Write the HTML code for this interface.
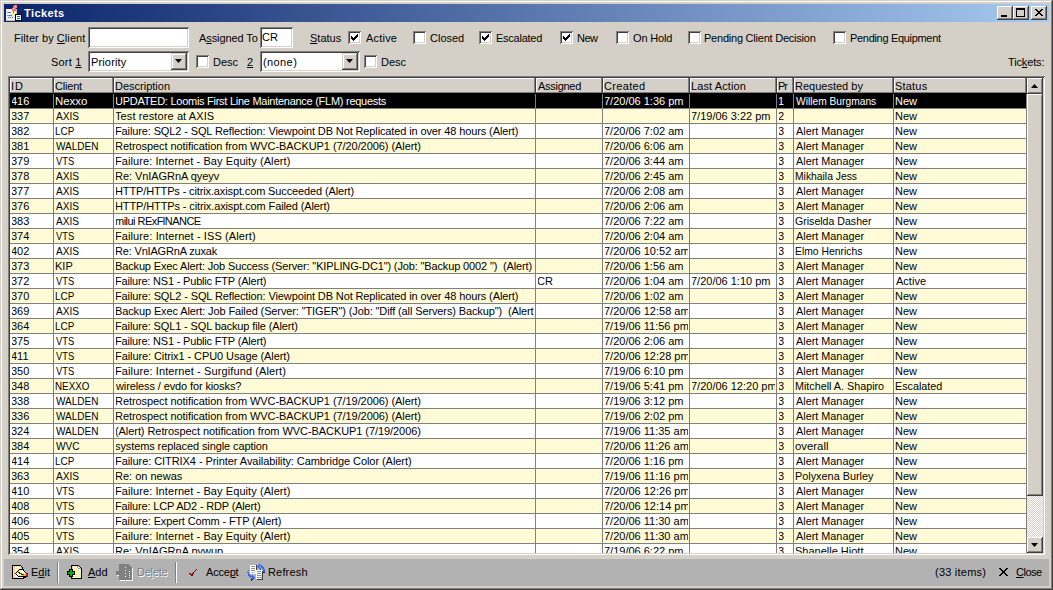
<!DOCTYPE html>
<html><head><meta charset="utf-8"><title>Tickets</title>
<style>
html,body{margin:0;padding:0}
body{width:1053px;height:590px;overflow:hidden;position:relative;background:#d4d0c8;font-family:"Liberation Sans",sans-serif;font-size:11px;color:#000}
div,span,svg{position:absolute;box-sizing:border-box}
.t{white-space:nowrap;line-height:15px}
.c{white-space:pre;line-height:15px;height:14px;overflow:hidden}
u{text-decoration:underline}
</style></head><body>
<div style="left:0;top:0;width:1053px;height:590px;background:#404040"></div>
<div style="left:0;top:0;width:1052px;height:589px;background:#d4d0c8"></div>
<div style="left:1px;top:1px;width:1051px;height:588px;background:#808080"></div>
<div style="left:1px;top:1px;width:1050px;height:587px;background:#ffffff"></div>
<div style="left:2px;top:2px;width:1049px;height:586px;background:#d4d0c8"></div>
<div style="left:4px;top:4px;width:1045px;height:18px;background:linear-gradient(to right,#0a246a,#a6caf0)"></div>
<span class="t" style="left:24px;top:6px;color:#fff;font-weight:bold;font-size:11px;line-height:15px;letter-spacing:0.4px">Tickets</span>
<svg style="position:absolute;left:4px;top:4px" width="20" height="18" viewBox="0 0 20 18" shape-rendering="crispEdges">
<rect x="2" y="5" width="11" height="12" fill="#c8c4b8"/>
<rect x="2" y="5" width="10" height="11" fill="#f4f4ee"/>
<rect x="4" y="8" width="3" height="1" fill="#5a6ae8"/><rect x="3" y="8" width="1" height="1" fill="#9090a0"/>
<rect x="3" y="11" width="6" height="1" fill="#9a9aa8"/><rect x="5" y="11" width="3" height="1" fill="#5a6ae8"/>
<rect x="4" y="13" width="1" height="1" fill="#5a6ae8"/><rect x="6" y="13" width="1" height="1" fill="#5a6ae8"/><rect x="8" y="13" width="1" height="1" fill="#5a6ae8"/>
<rect x="8" y="9" width="1" height="1" fill="#f0f040"/><rect x="10" y="9" width="1" height="1" fill="#f0f040"/>
<rect x="7" y="10" width="1" height="1" fill="#f0f040"/><rect x="9" y="10" width="1" height="1" fill="#f0f040"/>
<rect x="8" y="11" width="1" height="1" fill="#f0f040"/><rect x="10" y="11" width="1" height="1" fill="#f0f040"/>
<rect x="5" y="12" width="1" height="1" fill="#f0f040"/><rect x="7" y="12" width="1" height="1" fill="#f0f040"/><rect x="9" y="12" width="1" height="1" fill="#f0f040"/>
<rect x="3" y="14" width="1" height="1" fill="#f0f040"/><rect x="5" y="14" width="1" height="1" fill="#f0f040"/><rect x="7" y="14" width="1" height="1" fill="#f0f040"/><rect x="9" y="14" width="1" height="1" fill="#f0f040"/>
<rect x="9" y="2" width="3" height="3" fill="#f07070"/><rect x="10" y="1" width="3" height="3" fill="#f48080"/><rect x="11" y="2" width="1" height="1" fill="#f8f040"/>
<rect x="8" y="4" width="4" height="3" fill="#f07070"/><rect x="9" y="4" width="1" height="1" fill="#f8f040"/>
<rect x="9" y="7" width="1" height="2" fill="#707070"/>
<rect x="11" y="10" width="7" height="7" fill="#000"/>
<rect x="12" y="11" width="5" height="5" fill="#fff"/>
<rect x="13" y="12" width="3" height="1" fill="#008080"/><rect x="13" y="14" width="3" height="1" fill="#008080"/>
</svg>
<div style="left:997px;top:6px;width:16px;height:14px;background:#404040"></div>
<div style="left:997px;top:6px;width:15px;height:13px;background:#ffffff"></div>
<div style="left:998px;top:7px;width:14px;height:12px;background:#808080"></div>
<div style="left:998px;top:7px;width:13px;height:11px;background:#d4d0c8"></div>
<div style="left:1013px;top:6px;width:16px;height:14px;background:#404040"></div>
<div style="left:1013px;top:6px;width:15px;height:13px;background:#ffffff"></div>
<div style="left:1014px;top:7px;width:14px;height:12px;background:#808080"></div>
<div style="left:1014px;top:7px;width:13px;height:11px;background:#d4d0c8"></div>
<div style="left:1031px;top:6px;width:16px;height:14px;background:#404040"></div>
<div style="left:1031px;top:6px;width:15px;height:13px;background:#ffffff"></div>
<div style="left:1032px;top:7px;width:14px;height:12px;background:#808080"></div>
<div style="left:1032px;top:7px;width:13px;height:11px;background:#d4d0c8"></div>
<svg style="position:absolute;left:997px;top:6px" width="16" height="14"><rect x="4" y="9" width="6" height="2" fill="#000"/></svg>
<svg style="position:absolute;left:1013px;top:6px" width="16" height="14"><path d="M3 2h9v9h-9z M4 4v6h7v-6z" fill="#000" fill-rule="evenodd"/></svg>
<svg style="position:absolute;left:1035px;top:9px" width="8" height="7" shape-rendering="crispEdges"><rect x="0" y="0" width="1" height="1"/><rect x="1" y="0" width="1" height="1"/><rect x="6" y="0" width="1" height="1"/><rect x="7" y="0" width="1" height="1"/><rect x="1" y="1" width="1" height="1"/><rect x="2" y="1" width="1" height="1"/><rect x="5" y="1" width="1" height="1"/><rect x="6" y="1" width="1" height="1"/><rect x="2" y="2" width="1" height="1"/><rect x="3" y="2" width="1" height="1"/><rect x="4" y="2" width="1" height="1"/><rect x="5" y="2" width="1" height="1"/><rect x="3" y="3" width="1" height="1"/><rect x="4" y="3" width="1" height="1"/><rect x="2" y="4" width="1" height="1"/><rect x="3" y="4" width="1" height="1"/><rect x="4" y="4" width="1" height="1"/><rect x="5" y="4" width="1" height="1"/><rect x="1" y="5" width="1" height="1"/><rect x="2" y="5" width="1" height="1"/><rect x="5" y="5" width="1" height="1"/><rect x="6" y="5" width="1" height="1"/><rect x="0" y="6" width="1" height="1"/><rect x="1" y="6" width="1" height="1"/><rect x="6" y="6" width="1" height="1"/><rect x="7" y="6" width="1" height="1"/></svg>
<span class="t" style="left:14px;top:31px;letter-spacing:0.067px;">Filter by <u>C</u>lient</span>
<div style="left:88px;top:27px;width:101px;height:21px;background:#808080"></div>
<div style="left:89px;top:28px;width:100px;height:20px;background:#ffffff"></div>
<div style="left:89px;top:28px;width:99px;height:19px;background:#404040"></div>
<div style="left:90px;top:29px;width:98px;height:18px;background:#d4d0c8"></div>
<div style="left:90px;top:29px;width:97px;height:17px;background:#fff"></div>
<span class="t" style="left:199px;top:31px;letter-spacing:-0.100px;">A<u>s</u>signed To</span>
<div style="left:260px;top:27px;width:33px;height:21px;background:#808080"></div>
<div style="left:261px;top:28px;width:32px;height:20px;background:#ffffff"></div>
<div style="left:261px;top:28px;width:31px;height:19px;background:#404040"></div>
<div style="left:262px;top:29px;width:30px;height:18px;background:#d4d0c8"></div>
<div style="left:262px;top:29px;width:29px;height:17px;background:#fff"></div>
<span class="t" style="left:262px;top:30px;letter-spacing:0.000px;">CR</span>
<span class="t" style="left:310px;top:31px;letter-spacing:0.000px;"><u>S</u>tatus</span>
<div style="left:348px;top:31px;width:13px;height:13px;background:#808080"></div>
<div style="left:349px;top:32px;width:12px;height:12px;background:#ffffff"></div>
<div style="left:349px;top:32px;width:11px;height:11px;background:#404040"></div>
<div style="left:350px;top:33px;width:10px;height:10px;background:#d4d0c8"></div>
<div style="left:350px;top:33px;width:9px;height:9px;background:#fff"></div>
<svg style="position:absolute;left:348px;top:31px" width="13" height="13" shape-rendering="crispEdges"><rect x="9" y="3" width="1" height="1"/><rect x="8" y="4" width="1" height="1"/><rect x="9" y="4" width="1" height="1"/><rect x="3" y="5" width="1" height="1"/><rect x="7" y="5" width="1" height="1"/><rect x="8" y="5" width="1" height="1"/><rect x="9" y="5" width="1" height="1"/><rect x="3" y="6" width="1" height="1"/><rect x="4" y="6" width="1" height="1"/><rect x="6" y="6" width="1" height="1"/><rect x="7" y="6" width="1" height="1"/><rect x="8" y="6" width="1" height="1"/><rect x="3" y="7" width="1" height="1"/><rect x="4" y="7" width="1" height="1"/><rect x="5" y="7" width="1" height="1"/><rect x="6" y="7" width="1" height="1"/><rect x="7" y="7" width="1" height="1"/><rect x="4" y="8" width="1" height="1"/><rect x="5" y="8" width="1" height="1"/><rect x="6" y="8" width="1" height="1"/><rect x="5" y="9" width="1" height="1"/></svg>
<span class="t" style="left:366px;top:31px;letter-spacing:0.200px;">Active</span>
<div style="left:413px;top:31px;width:13px;height:13px;background:#808080"></div>
<div style="left:414px;top:32px;width:12px;height:12px;background:#ffffff"></div>
<div style="left:414px;top:32px;width:11px;height:11px;background:#404040"></div>
<div style="left:415px;top:33px;width:10px;height:10px;background:#d4d0c8"></div>
<div style="left:415px;top:33px;width:9px;height:9px;background:#fff"></div>
<span class="t" style="left:430px;top:31px;letter-spacing:0.000px;">Closed</span>
<div style="left:479px;top:31px;width:13px;height:13px;background:#808080"></div>
<div style="left:480px;top:32px;width:12px;height:12px;background:#ffffff"></div>
<div style="left:480px;top:32px;width:11px;height:11px;background:#404040"></div>
<div style="left:481px;top:33px;width:10px;height:10px;background:#d4d0c8"></div>
<div style="left:481px;top:33px;width:9px;height:9px;background:#fff"></div>
<svg style="position:absolute;left:479px;top:31px" width="13" height="13" shape-rendering="crispEdges"><rect x="9" y="3" width="1" height="1"/><rect x="8" y="4" width="1" height="1"/><rect x="9" y="4" width="1" height="1"/><rect x="3" y="5" width="1" height="1"/><rect x="7" y="5" width="1" height="1"/><rect x="8" y="5" width="1" height="1"/><rect x="9" y="5" width="1" height="1"/><rect x="3" y="6" width="1" height="1"/><rect x="4" y="6" width="1" height="1"/><rect x="6" y="6" width="1" height="1"/><rect x="7" y="6" width="1" height="1"/><rect x="8" y="6" width="1" height="1"/><rect x="3" y="7" width="1" height="1"/><rect x="4" y="7" width="1" height="1"/><rect x="5" y="7" width="1" height="1"/><rect x="6" y="7" width="1" height="1"/><rect x="7" y="7" width="1" height="1"/><rect x="4" y="8" width="1" height="1"/><rect x="5" y="8" width="1" height="1"/><rect x="6" y="8" width="1" height="1"/><rect x="5" y="9" width="1" height="1"/></svg>
<span class="t" style="left:496px;top:31px;letter-spacing:-0.250px;">Escalated</span>
<div style="left:560px;top:31px;width:13px;height:13px;background:#808080"></div>
<div style="left:561px;top:32px;width:12px;height:12px;background:#ffffff"></div>
<div style="left:561px;top:32px;width:11px;height:11px;background:#404040"></div>
<div style="left:562px;top:33px;width:10px;height:10px;background:#d4d0c8"></div>
<div style="left:562px;top:33px;width:9px;height:9px;background:#fff"></div>
<svg style="position:absolute;left:560px;top:31px" width="13" height="13" shape-rendering="crispEdges"><rect x="9" y="3" width="1" height="1"/><rect x="8" y="4" width="1" height="1"/><rect x="9" y="4" width="1" height="1"/><rect x="3" y="5" width="1" height="1"/><rect x="7" y="5" width="1" height="1"/><rect x="8" y="5" width="1" height="1"/><rect x="9" y="5" width="1" height="1"/><rect x="3" y="6" width="1" height="1"/><rect x="4" y="6" width="1" height="1"/><rect x="6" y="6" width="1" height="1"/><rect x="7" y="6" width="1" height="1"/><rect x="8" y="6" width="1" height="1"/><rect x="3" y="7" width="1" height="1"/><rect x="4" y="7" width="1" height="1"/><rect x="5" y="7" width="1" height="1"/><rect x="6" y="7" width="1" height="1"/><rect x="7" y="7" width="1" height="1"/><rect x="4" y="8" width="1" height="1"/><rect x="5" y="8" width="1" height="1"/><rect x="6" y="8" width="1" height="1"/><rect x="5" y="9" width="1" height="1"/></svg>
<span class="t" style="left:577px;top:31px;letter-spacing:-0.500px;">New</span>
<div style="left:616px;top:31px;width:13px;height:13px;background:#808080"></div>
<div style="left:617px;top:32px;width:12px;height:12px;background:#ffffff"></div>
<div style="left:617px;top:32px;width:11px;height:11px;background:#404040"></div>
<div style="left:618px;top:33px;width:10px;height:10px;background:#d4d0c8"></div>
<div style="left:618px;top:33px;width:9px;height:9px;background:#fff"></div>
<span class="t" style="left:633px;top:31px;letter-spacing:-0.167px;">On Hold</span>
<div style="left:688px;top:31px;width:13px;height:13px;background:#808080"></div>
<div style="left:689px;top:32px;width:12px;height:12px;background:#ffffff"></div>
<div style="left:689px;top:32px;width:11px;height:11px;background:#404040"></div>
<div style="left:690px;top:33px;width:10px;height:10px;background:#d4d0c8"></div>
<div style="left:690px;top:33px;width:9px;height:9px;background:#fff"></div>
<span class="t" style="left:704px;top:31px;letter-spacing:-0.227px;">Pending Client Decision</span>
<div style="left:833px;top:31px;width:13px;height:13px;background:#808080"></div>
<div style="left:834px;top:32px;width:12px;height:12px;background:#ffffff"></div>
<div style="left:834px;top:32px;width:11px;height:11px;background:#404040"></div>
<div style="left:835px;top:33px;width:10px;height:10px;background:#d4d0c8"></div>
<div style="left:835px;top:33px;width:9px;height:9px;background:#fff"></div>
<span class="t" style="left:850px;top:31px;letter-spacing:-0.312px;">Pending Equipment</span>
<span class="t" style="left:51px;top:55px;letter-spacing:0.200px;">Sort <u>1</u></span>
<div style="left:88px;top:51px;width:101px;height:21px;background:#808080"></div>
<div style="left:89px;top:52px;width:100px;height:20px;background:#ffffff"></div>
<div style="left:89px;top:52px;width:99px;height:19px;background:#404040"></div>
<div style="left:90px;top:53px;width:98px;height:18px;background:#d4d0c8"></div>
<div style="left:90px;top:53px;width:97px;height:17px;background:#fff"></div>
<span class="t" style="left:91px;top:55px;letter-spacing:0.143px;">Priority</span>
<div style="left:171px;top:53px;width:16px;height:17px;background:#404040"></div>
<div style="left:171px;top:53px;width:15px;height:16px;background:#d4d0c8"></div>
<div style="left:172px;top:54px;width:14px;height:15px;background:#808080"></div>
<div style="left:172px;top:54px;width:13px;height:14px;background:#ffffff"></div>
<div style="left:173px;top:55px;width:12px;height:13px;background:#d4d0c8"></div>
<svg style="position:absolute;left:171px;top:53px" width="16" height="17"><path d="M4 6h7l-3.5 4z" fill="#000"/></svg>
<div style="left:196px;top:55px;width:13px;height:13px;background:#808080"></div>
<div style="left:197px;top:56px;width:12px;height:12px;background:#ffffff"></div>
<div style="left:197px;top:56px;width:11px;height:11px;background:#404040"></div>
<div style="left:198px;top:57px;width:10px;height:10px;background:#d4d0c8"></div>
<div style="left:198px;top:57px;width:9px;height:9px;background:#fff"></div>
<span class="t" style="left:213px;top:55px;letter-spacing:0.000px;">Desc</span>
<span class="t" style="left:247px;top:55px;letter-spacing:0.000px;"><u>2</u></span>
<div style="left:260px;top:51px;width:100px;height:21px;background:#808080"></div>
<div style="left:261px;top:52px;width:99px;height:20px;background:#ffffff"></div>
<div style="left:261px;top:52px;width:98px;height:19px;background:#404040"></div>
<div style="left:262px;top:53px;width:97px;height:18px;background:#d4d0c8"></div>
<div style="left:262px;top:53px;width:96px;height:17px;background:#fff"></div>
<span class="t" style="left:263px;top:55px;letter-spacing:0.400px;">(none)</span>
<div style="left:342px;top:53px;width:16px;height:17px;background:#404040"></div>
<div style="left:342px;top:53px;width:15px;height:16px;background:#d4d0c8"></div>
<div style="left:343px;top:54px;width:14px;height:15px;background:#808080"></div>
<div style="left:343px;top:54px;width:13px;height:14px;background:#ffffff"></div>
<div style="left:344px;top:55px;width:12px;height:13px;background:#d4d0c8"></div>
<svg style="position:absolute;left:342px;top:53px" width="16" height="17"><path d="M4 6h7l-3.5 4z" fill="#000"/></svg>
<div style="left:364px;top:55px;width:13px;height:13px;background:#808080"></div>
<div style="left:365px;top:56px;width:12px;height:12px;background:#ffffff"></div>
<div style="left:365px;top:56px;width:11px;height:11px;background:#404040"></div>
<div style="left:366px;top:57px;width:10px;height:10px;background:#d4d0c8"></div>
<div style="left:366px;top:57px;width:9px;height:9px;background:#fff"></div>
<span class="t" style="left:381px;top:55px;letter-spacing:0.000px;">Desc</span>
<span class="t" style="left:1008px;top:55px;letter-spacing:-0.143px;">Tic<u>k</u>ets:</span>
<div style="left:8px;top:76px;width:1037px;height:479px;background:#808080"></div>
<div style="left:9px;top:77px;width:1036px;height:478px;background:#ffffff"></div>
<div style="left:9px;top:77px;width:1035px;height:477px;background:#404040"></div>
<div style="left:10px;top:78px;width:1034px;height:476px;background:#d4d0c8"></div>
<div style="left:10px;top:78px;width:1033px;height:475px;background:#fff"></div>
<div style="left:10px;top:78px;width:44px;height:15px;background:#404040"></div>
<div style="left:10px;top:78px;width:43px;height:15px;background:#808080"></div>
<div style="left:10px;top:78px;width:42px;height:14px;background:#ffffff"></div>
<div style="left:11px;top:79px;width:41px;height:13px;background:#d4d0c8"></div>
<span class="t" style="left:11px;top:79px;letter-spacing:1.000px;">ID</span>
<div style="left:54px;top:78px;width:60px;height:15px;background:#404040"></div>
<div style="left:54px;top:78px;width:59px;height:15px;background:#808080"></div>
<div style="left:54px;top:78px;width:58px;height:14px;background:#ffffff"></div>
<div style="left:55px;top:79px;width:57px;height:13px;background:#d4d0c8"></div>
<span class="t" style="left:55px;top:79px;letter-spacing:-0.200px;">Client</span>
<div style="left:114px;top:78px;width:422px;height:15px;background:#404040"></div>
<div style="left:114px;top:78px;width:421px;height:15px;background:#808080"></div>
<div style="left:114px;top:78px;width:420px;height:14px;background:#ffffff"></div>
<div style="left:115px;top:79px;width:419px;height:13px;background:#d4d0c8"></div>
<span class="t" style="left:115px;top:79px;letter-spacing:0.000px;">Description</span>
<div style="left:536px;top:78px;width:67px;height:15px;background:#404040"></div>
<div style="left:536px;top:78px;width:66px;height:15px;background:#808080"></div>
<div style="left:536px;top:78px;width:65px;height:14px;background:#ffffff"></div>
<div style="left:537px;top:79px;width:64px;height:13px;background:#d4d0c8"></div>
<span class="t" style="left:538px;top:79px;letter-spacing:-0.286px;">Assigned</span>
<div style="left:603px;top:78px;width:87px;height:15px;background:#404040"></div>
<div style="left:603px;top:78px;width:86px;height:15px;background:#808080"></div>
<div style="left:603px;top:78px;width:85px;height:14px;background:#ffffff"></div>
<div style="left:604px;top:79px;width:84px;height:13px;background:#d4d0c8"></div>
<span class="t" style="left:604px;top:79px;letter-spacing:0.333px;">Created</span>
<div style="left:690px;top:78px;width:87px;height:15px;background:#404040"></div>
<div style="left:690px;top:78px;width:86px;height:15px;background:#808080"></div>
<div style="left:690px;top:78px;width:85px;height:14px;background:#ffffff"></div>
<div style="left:691px;top:79px;width:84px;height:13px;background:#d4d0c8"></div>
<span class="t" style="left:691px;top:79px;letter-spacing:0.100px;">Last Action</span>
<div style="left:777px;top:78px;width:17px;height:15px;background:#404040"></div>
<div style="left:777px;top:78px;width:16px;height:15px;background:#808080"></div>
<div style="left:777px;top:78px;width:15px;height:14px;background:#ffffff"></div>
<div style="left:778px;top:79px;width:14px;height:13px;background:#d4d0c8"></div>
<span class="t" style="left:778px;top:79px;letter-spacing:-1.000px;">Pr</span>
<div style="left:794px;top:78px;width:100px;height:15px;background:#404040"></div>
<div style="left:794px;top:78px;width:99px;height:15px;background:#808080"></div>
<div style="left:794px;top:78px;width:98px;height:14px;background:#ffffff"></div>
<div style="left:795px;top:79px;width:97px;height:13px;background:#d4d0c8"></div>
<span class="t" style="left:795px;top:79px;letter-spacing:0.000px;">Requested by</span>
<div style="left:894px;top:78px;width:133px;height:15px;background:#404040"></div>
<div style="left:894px;top:78px;width:132px;height:15px;background:#808080"></div>
<div style="left:894px;top:78px;width:131px;height:14px;background:#ffffff"></div>
<div style="left:895px;top:79px;width:130px;height:13px;background:#d4d0c8"></div>
<span class="t" style="left:895px;top:79px;letter-spacing:0.200px;">Status</span>
<div style="left:10px;top:93px;width:1017px;height:460px;overflow:hidden">
<div style="left:0;top:0px;width:1017px;height:15px;background:#000"></div>
<span class="c" style="left:2px;top:1px;width:40px;color:#fff"><span style="position:relative;left:-1px;letter-spacing:0.000px">416</span></span>
<span class="c" style="left:45px;top:1px;width:57px;color:#fff"><span style="position:absolute;left:0px;top:0;transform:scaleX(1.0400);transform-origin:0 0">Nexxo</span></span>
<span class="c" style="left:106px;top:1px;width:418px;color:#fff"><span style="position:relative;left:-1px;letter-spacing:-0.269px">UPDATED: Loomis First Line Maintenance (FLM) requests</span></span>
<span class="c" style="left:595px;top:1px;width:83px;color:#fff"><span style="position:relative;left:-1px;letter-spacing:0.000px">7/20/06 1:36 pm</span></span>
<span class="c" style="left:769px;top:1px;width:13px;color:#fff"><span style="position:relative;left:-1px;letter-spacing:0.000px">1</span></span>
<span class="c" style="left:785px;top:1px;width:97px;color:#fff"><span style="position:absolute;left:1px;top:0;transform:scaleX(0.9305);transform-origin:0 0">Willem Burgmans</span></span>
<span class="c" style="left:885px;top:1px;width:130px;color:#fff"><span style="position:absolute;left:0px;top:0;transform:scaleX(1.0000);transform-origin:0 0">New</span></span>
<div style="left:0;top:15px;width:1017px;height:15px;background:#fffbd6"></div>
<span class="c" style="left:2px;top:16px;width:40px;color:#000"><span style="position:relative;left:-1px;letter-spacing:0.000px">337</span></span>
<span class="c" style="left:45px;top:16px;width:57px;color:#000"><span style="position:absolute;left:1px;top:0;transform:scaleX(0.9201);transform-origin:0 0">AXIS</span></span>
<span class="c" style="left:106px;top:16px;width:418px;color:#000"><span style="position:relative;left:-1px;letter-spacing:0.105px">Test restore at AXIS</span></span>
<span class="c" style="left:682px;top:16px;width:83px;color:#000"><span style="position:relative;left:-1px;letter-spacing:0.000px">7/19/06 3:22 pm</span></span>
<span class="c" style="left:769px;top:16px;width:13px;color:#000"><span style="position:relative;left:-1px;letter-spacing:0.000px">2</span></span>
<span class="c" style="left:885px;top:16px;width:130px;color:#000"><span style="position:absolute;left:0px;top:0;transform:scaleX(1.0000);transform-origin:0 0">New</span></span>
<div style="left:0;top:30px;width:1017px;height:15px;background:#fff"></div>
<span class="c" style="left:2px;top:31px;width:40px;color:#000"><span style="position:relative;left:-1px;letter-spacing:0.000px">382</span></span>
<span class="c" style="left:45px;top:31px;width:57px;color:#000"><span style="position:absolute;left:0px;top:0;transform:scaleX(0.9000);transform-origin:0 0">LCP</span></span>
<span class="c" style="left:106px;top:31px;width:418px;color:#000"><span style="position:relative;left:-1px;letter-spacing:-0.120px">Failure: SQL2 - SQL Reflection: Viewpoint DB Not Replicated in over 48 hours (Alert)</span></span>
<span class="c" style="left:595px;top:31px;width:83px;color:#000"><span style="position:relative;left:-1px;letter-spacing:0.000px">7/20/06 7:02 am</span></span>
<span class="c" style="left:769px;top:31px;width:13px;color:#000"><span style="position:relative;left:-1px;letter-spacing:0.000px">3</span></span>
<span class="c" style="left:785px;top:31px;width:97px;color:#000"><span style="position:absolute;left:1px;top:0;transform:scaleX(0.9855);transform-origin:0 0">Alert Manager</span></span>
<span class="c" style="left:885px;top:31px;width:130px;color:#000"><span style="position:absolute;left:0px;top:0;transform:scaleX(1.0000);transform-origin:0 0">New</span></span>
<div style="left:0;top:45px;width:1017px;height:15px;background:#fffbd6"></div>
<span class="c" style="left:2px;top:46px;width:40px;color:#000"><span style="position:relative;left:-1px;letter-spacing:0.000px">381</span></span>
<span class="c" style="left:45px;top:46px;width:57px;color:#000"><span style="position:absolute;left:1px;top:0;transform:scaleX(0.9116);transform-origin:0 0">WALDEN</span></span>
<span class="c" style="left:106px;top:46px;width:418px;color:#000"><span style="position:relative;left:-1px;letter-spacing:-0.068px">Retrospect notification from WVC-BACKUP1 (7/20/2006) (Alert)</span></span>
<span class="c" style="left:595px;top:46px;width:83px;color:#000"><span style="position:relative;left:-1px;letter-spacing:0.000px">7/20/06 6:06 am</span></span>
<span class="c" style="left:769px;top:46px;width:13px;color:#000"><span style="position:relative;left:-1px;letter-spacing:0.000px">3</span></span>
<span class="c" style="left:785px;top:46px;width:97px;color:#000"><span style="position:absolute;left:1px;top:0;transform:scaleX(0.9855);transform-origin:0 0">Alert Manager</span></span>
<span class="c" style="left:885px;top:46px;width:130px;color:#000"><span style="position:absolute;left:0px;top:0;transform:scaleX(1.0000);transform-origin:0 0">New</span></span>
<div style="left:0;top:60px;width:1017px;height:15px;background:#fff"></div>
<span class="c" style="left:2px;top:61px;width:40px;color:#000"><span style="position:relative;left:-1px;letter-spacing:0.000px">379</span></span>
<span class="c" style="left:45px;top:61px;width:57px;color:#000"><span style="position:absolute;left:1px;top:0;transform:scaleX(0.8526);transform-origin:0 0">VTS</span></span>
<span class="c" style="left:106px;top:61px;width:418px;color:#000"><span style="position:relative;left:-1px;letter-spacing:0.081px">Failure: Internet - Bay Equity (Alert)</span></span>
<span class="c" style="left:595px;top:61px;width:83px;color:#000"><span style="position:relative;left:-1px;letter-spacing:0.000px">7/20/06 3:44 am</span></span>
<span class="c" style="left:769px;top:61px;width:13px;color:#000"><span style="position:relative;left:-1px;letter-spacing:0.000px">3</span></span>
<span class="c" style="left:785px;top:61px;width:97px;color:#000"><span style="position:absolute;left:1px;top:0;transform:scaleX(0.9855);transform-origin:0 0">Alert Manager</span></span>
<span class="c" style="left:885px;top:61px;width:130px;color:#000"><span style="position:absolute;left:0px;top:0;transform:scaleX(1.0000);transform-origin:0 0">New</span></span>
<div style="left:0;top:75px;width:1017px;height:15px;background:#fffbd6"></div>
<span class="c" style="left:2px;top:76px;width:40px;color:#000"><span style="position:relative;left:-1px;letter-spacing:0.000px">378</span></span>
<span class="c" style="left:45px;top:76px;width:57px;color:#000"><span style="position:absolute;left:1px;top:0;transform:scaleX(0.9201);transform-origin:0 0">AXIS</span></span>
<span class="c" style="left:106px;top:76px;width:418px;color:#000"><span style="position:relative;left:-1px;letter-spacing:-0.059px">Re: VnIAGRnA qyeyv</span></span>
<span class="c" style="left:595px;top:76px;width:83px;color:#000"><span style="position:relative;left:-1px;letter-spacing:0.000px">7/20/06 2:45 am</span></span>
<span class="c" style="left:769px;top:76px;width:13px;color:#000"><span style="position:relative;left:-1px;letter-spacing:0.000px">3</span></span>
<span class="c" style="left:785px;top:76px;width:97px;color:#000"><span style="position:absolute;left:0px;top:0;transform:scaleX(0.9390);transform-origin:0 0">Mikhaila Jess</span></span>
<span class="c" style="left:885px;top:76px;width:130px;color:#000"><span style="position:absolute;left:0px;top:0;transform:scaleX(1.0000);transform-origin:0 0">New</span></span>
<div style="left:0;top:90px;width:1017px;height:15px;background:#fff"></div>
<span class="c" style="left:2px;top:91px;width:40px;color:#000"><span style="position:relative;left:-1px;letter-spacing:0.000px">377</span></span>
<span class="c" style="left:45px;top:91px;width:57px;color:#000"><span style="position:absolute;left:1px;top:0;transform:scaleX(0.9201);transform-origin:0 0">AXIS</span></span>
<span class="c" style="left:106px;top:91px;width:418px;color:#000"><span style="position:relative;left:-1px;letter-spacing:-0.128px">HTTP/HTTPs - citrix.axispt.com Succeeded (Alert)</span></span>
<span class="c" style="left:595px;top:91px;width:83px;color:#000"><span style="position:relative;left:-1px;letter-spacing:0.000px">7/20/06 2:08 am</span></span>
<span class="c" style="left:769px;top:91px;width:13px;color:#000"><span style="position:relative;left:-1px;letter-spacing:0.000px">3</span></span>
<span class="c" style="left:785px;top:91px;width:97px;color:#000"><span style="position:absolute;left:1px;top:0;transform:scaleX(0.9855);transform-origin:0 0">Alert Manager</span></span>
<span class="c" style="left:885px;top:91px;width:130px;color:#000"><span style="position:absolute;left:0px;top:0;transform:scaleX(1.0000);transform-origin:0 0">New</span></span>
<div style="left:0;top:105px;width:1017px;height:15px;background:#fffbd6"></div>
<span class="c" style="left:2px;top:106px;width:40px;color:#000"><span style="position:relative;left:-1px;letter-spacing:0.000px">376</span></span>
<span class="c" style="left:45px;top:106px;width:57px;color:#000"><span style="position:absolute;left:1px;top:0;transform:scaleX(0.9201);transform-origin:0 0">AXIS</span></span>
<span class="c" style="left:106px;top:106px;width:418px;color:#000"><span style="position:relative;left:-1px;letter-spacing:-0.114px">HTTP/HTTPs - citrix.axispt.com Failed (Alert)</span></span>
<span class="c" style="left:595px;top:106px;width:83px;color:#000"><span style="position:relative;left:-1px;letter-spacing:0.000px">7/20/06 2:06 am</span></span>
<span class="c" style="left:769px;top:106px;width:13px;color:#000"><span style="position:relative;left:-1px;letter-spacing:0.000px">3</span></span>
<span class="c" style="left:785px;top:106px;width:97px;color:#000"><span style="position:absolute;left:1px;top:0;transform:scaleX(0.9855);transform-origin:0 0">Alert Manager</span></span>
<span class="c" style="left:885px;top:106px;width:130px;color:#000"><span style="position:absolute;left:0px;top:0;transform:scaleX(1.0000);transform-origin:0 0">New</span></span>
<div style="left:0;top:120px;width:1017px;height:15px;background:#fff"></div>
<span class="c" style="left:2px;top:121px;width:40px;color:#000"><span style="position:relative;left:-1px;letter-spacing:0.000px">383</span></span>
<span class="c" style="left:45px;top:121px;width:57px;color:#000"><span style="position:absolute;left:1px;top:0;transform:scaleX(0.9201);transform-origin:0 0">AXIS</span></span>
<span class="c" style="left:106px;top:121px;width:418px;color:#000"><span style="position:relative;left:-1px;letter-spacing:-0.533px">milui RExFlNANCE</span></span>
<span class="c" style="left:595px;top:121px;width:83px;color:#000"><span style="position:relative;left:-1px;letter-spacing:0.000px">7/20/06 7:22 am</span></span>
<span class="c" style="left:769px;top:121px;width:13px;color:#000"><span style="position:relative;left:-1px;letter-spacing:0.000px">3</span></span>
<span class="c" style="left:785px;top:121px;width:97px;color:#000"><span style="position:absolute;left:0px;top:0;transform:scaleX(0.9615);transform-origin:0 0">Griselda Dasher</span></span>
<span class="c" style="left:885px;top:121px;width:130px;color:#000"><span style="position:absolute;left:0px;top:0;transform:scaleX(1.0000);transform-origin:0 0">New</span></span>
<div style="left:0;top:135px;width:1017px;height:15px;background:#fffbd6"></div>
<span class="c" style="left:2px;top:136px;width:40px;color:#000"><span style="position:relative;left:-1px;letter-spacing:0.000px">374</span></span>
<span class="c" style="left:45px;top:136px;width:57px;color:#000"><span style="position:absolute;left:1px;top:0;transform:scaleX(0.8526);transform-origin:0 0">VTS</span></span>
<span class="c" style="left:106px;top:136px;width:418px;color:#000"><span style="position:relative;left:-1px;letter-spacing:0.100px">Failure: Internet - ISS (Alert)</span></span>
<span class="c" style="left:595px;top:136px;width:83px;color:#000"><span style="position:relative;left:-1px;letter-spacing:0.000px">7/20/06 2:04 am</span></span>
<span class="c" style="left:769px;top:136px;width:13px;color:#000"><span style="position:relative;left:-1px;letter-spacing:0.000px">3</span></span>
<span class="c" style="left:785px;top:136px;width:97px;color:#000"><span style="position:absolute;left:1px;top:0;transform:scaleX(0.9855);transform-origin:0 0">Alert Manager</span></span>
<span class="c" style="left:885px;top:136px;width:130px;color:#000"><span style="position:absolute;left:0px;top:0;transform:scaleX(1.0000);transform-origin:0 0">New</span></span>
<div style="left:0;top:150px;width:1017px;height:15px;background:#fff"></div>
<span class="c" style="left:2px;top:151px;width:40px;color:#000"><span style="position:relative;left:-1px;letter-spacing:0.000px">402</span></span>
<span class="c" style="left:45px;top:151px;width:57px;color:#000"><span style="position:absolute;left:1px;top:0;transform:scaleX(0.9201);transform-origin:0 0">AXIS</span></span>
<span class="c" style="left:106px;top:151px;width:418px;color:#000"><span style="position:relative;left:-1px;letter-spacing:-0.176px">Re: VnIAGRnA zuxak</span></span>
<span class="c" style="left:595px;top:151px;width:83px;color:#000"><span style="position:relative;left:-1px;letter-spacing:0.000px">7/20/06 10:52 am</span></span>
<span class="c" style="left:769px;top:151px;width:13px;color:#000"><span style="position:relative;left:-1px;letter-spacing:0.000px">3</span></span>
<span class="c" style="left:785px;top:151px;width:97px;color:#000"><span style="position:absolute;left:0px;top:0;transform:scaleX(0.9429);transform-origin:0 0">Elmo Henrichs</span></span>
<span class="c" style="left:885px;top:151px;width:130px;color:#000"><span style="position:absolute;left:0px;top:0;transform:scaleX(1.0000);transform-origin:0 0">New</span></span>
<div style="left:0;top:165px;width:1017px;height:15px;background:#fffbd6"></div>
<span class="c" style="left:2px;top:166px;width:40px;color:#000"><span style="position:relative;left:-1px;letter-spacing:0.000px">373</span></span>
<span class="c" style="left:45px;top:166px;width:57px;color:#000"><span style="position:absolute;left:0px;top:0;transform:scaleX(1.0000);transform-origin:0 0">KIP</span></span>
<span class="c" style="left:106px;top:166px;width:418px;color:#000"><span style="position:relative;left:-1px;letter-spacing:-0.140px">Backup Exec Alert: Job Success (Server: &quot;KIPLING-DC1&quot;) (Job: &quot;Backup 0002 &quot;)  (Alert)</span></span>
<span class="c" style="left:595px;top:166px;width:83px;color:#000"><span style="position:relative;left:-1px;letter-spacing:0.000px">7/20/06 1:56 am</span></span>
<span class="c" style="left:769px;top:166px;width:13px;color:#000"><span style="position:relative;left:-1px;letter-spacing:0.000px">3</span></span>
<span class="c" style="left:785px;top:166px;width:97px;color:#000"><span style="position:absolute;left:1px;top:0;transform:scaleX(0.9855);transform-origin:0 0">Alert Manager</span></span>
<span class="c" style="left:885px;top:166px;width:130px;color:#000"><span style="position:absolute;left:0px;top:0;transform:scaleX(1.0000);transform-origin:0 0">New</span></span>
<div style="left:0;top:180px;width:1017px;height:15px;background:#fff"></div>
<span class="c" style="left:2px;top:181px;width:40px;color:#000"><span style="position:relative;left:-1px;letter-spacing:0.000px">372</span></span>
<span class="c" style="left:45px;top:181px;width:57px;color:#000"><span style="position:absolute;left:1px;top:0;transform:scaleX(0.8526);transform-origin:0 0">VTS</span></span>
<span class="c" style="left:106px;top:181px;width:418px;color:#000"><span style="position:relative;left:-1px;letter-spacing:-0.188px">Failure: NS1 - Public FTP (Alert)</span></span>
<span class="c" style="left:528px;top:181px;width:63px;color:#000"><span style="position:relative;left:-1px;letter-spacing:0.000px">CR</span></span>
<span class="c" style="left:595px;top:181px;width:83px;color:#000"><span style="position:relative;left:-1px;letter-spacing:0.000px">7/20/06 1:04 am</span></span>
<span class="c" style="left:682px;top:181px;width:83px;color:#000"><span style="position:relative;left:-1px;letter-spacing:0.000px">7/20/06 1:10 pm</span></span>
<span class="c" style="left:769px;top:181px;width:13px;color:#000"><span style="position:relative;left:-1px;letter-spacing:0.000px">3</span></span>
<span class="c" style="left:785px;top:181px;width:97px;color:#000"><span style="position:absolute;left:1px;top:0;transform:scaleX(0.9855);transform-origin:0 0">Alert Manager</span></span>
<span class="c" style="left:885px;top:181px;width:130px;color:#000"><span style="position:absolute;left:1px;top:0;transform:scaleX(1.0022);transform-origin:0 0">Active</span></span>
<div style="left:0;top:195px;width:1017px;height:15px;background:#fffbd6"></div>
<span class="c" style="left:2px;top:196px;width:40px;color:#000"><span style="position:relative;left:-1px;letter-spacing:0.000px">370</span></span>
<span class="c" style="left:45px;top:196px;width:57px;color:#000"><span style="position:absolute;left:0px;top:0;transform:scaleX(0.9000);transform-origin:0 0">LCP</span></span>
<span class="c" style="left:106px;top:196px;width:418px;color:#000"><span style="position:relative;left:-1px;letter-spacing:-0.120px">Failure: SQL2 - SQL Reflection: Viewpoint DB Not Replicated in over 48 hours (Alert)</span></span>
<span class="c" style="left:595px;top:196px;width:83px;color:#000"><span style="position:relative;left:-1px;letter-spacing:0.000px">7/20/06 1:02 am</span></span>
<span class="c" style="left:769px;top:196px;width:13px;color:#000"><span style="position:relative;left:-1px;letter-spacing:0.000px">3</span></span>
<span class="c" style="left:785px;top:196px;width:97px;color:#000"><span style="position:absolute;left:1px;top:0;transform:scaleX(0.9855);transform-origin:0 0">Alert Manager</span></span>
<span class="c" style="left:885px;top:196px;width:130px;color:#000"><span style="position:absolute;left:0px;top:0;transform:scaleX(1.0000);transform-origin:0 0">New</span></span>
<div style="left:0;top:210px;width:1017px;height:15px;background:#fff"></div>
<span class="c" style="left:2px;top:211px;width:40px;color:#000"><span style="position:relative;left:-1px;letter-spacing:0.000px">369</span></span>
<span class="c" style="left:45px;top:211px;width:57px;color:#000"><span style="position:absolute;left:1px;top:0;transform:scaleX(0.9201);transform-origin:0 0">AXIS</span></span>
<span class="c" style="left:106px;top:211px;width:418px;color:#000"><span style="position:relative;left:-1px;letter-spacing:-0.120px">Backup Exec Alert: Job Failed (Server: &quot;TIGER&quot;) (Job: &quot;Diff (all Servers) Backup&quot;)  (Alert)</span></span>
<span class="c" style="left:595px;top:211px;width:83px;color:#000"><span style="position:relative;left:-1px;letter-spacing:0.000px">7/20/06 12:58 am</span></span>
<span class="c" style="left:769px;top:211px;width:13px;color:#000"><span style="position:relative;left:-1px;letter-spacing:0.000px">3</span></span>
<span class="c" style="left:785px;top:211px;width:97px;color:#000"><span style="position:absolute;left:1px;top:0;transform:scaleX(0.9855);transform-origin:0 0">Alert Manager</span></span>
<span class="c" style="left:885px;top:211px;width:130px;color:#000"><span style="position:absolute;left:0px;top:0;transform:scaleX(1.0000);transform-origin:0 0">New</span></span>
<div style="left:0;top:225px;width:1017px;height:15px;background:#fffbd6"></div>
<span class="c" style="left:2px;top:226px;width:40px;color:#000"><span style="position:relative;left:-1px;letter-spacing:0.000px">364</span></span>
<span class="c" style="left:45px;top:226px;width:57px;color:#000"><span style="position:absolute;left:0px;top:0;transform:scaleX(0.9000);transform-origin:0 0">LCP</span></span>
<span class="c" style="left:106px;top:226px;width:418px;color:#000"><span style="position:relative;left:-1px;letter-spacing:-0.132px">Failure: SQL1 - SQL backup file (Alert)</span></span>
<span class="c" style="left:595px;top:226px;width:83px;color:#000"><span style="position:relative;left:-1px;letter-spacing:0.000px">7/19/06 11:56 pm</span></span>
<span class="c" style="left:769px;top:226px;width:13px;color:#000"><span style="position:relative;left:-1px;letter-spacing:0.000px">3</span></span>
<span class="c" style="left:785px;top:226px;width:97px;color:#000"><span style="position:absolute;left:1px;top:0;transform:scaleX(0.9855);transform-origin:0 0">Alert Manager</span></span>
<span class="c" style="left:885px;top:226px;width:130px;color:#000"><span style="position:absolute;left:0px;top:0;transform:scaleX(1.0000);transform-origin:0 0">New</span></span>
<div style="left:0;top:240px;width:1017px;height:15px;background:#fff"></div>
<span class="c" style="left:2px;top:241px;width:40px;color:#000"><span style="position:relative;left:-1px;letter-spacing:0.000px">375</span></span>
<span class="c" style="left:45px;top:241px;width:57px;color:#000"><span style="position:absolute;left:1px;top:0;transform:scaleX(0.8526);transform-origin:0 0">VTS</span></span>
<span class="c" style="left:106px;top:241px;width:418px;color:#000"><span style="position:relative;left:-1px;letter-spacing:-0.188px">Failure: NS1 - Public FTP (Alert)</span></span>
<span class="c" style="left:595px;top:241px;width:83px;color:#000"><span style="position:relative;left:-1px;letter-spacing:0.000px">7/20/06 2:06 am</span></span>
<span class="c" style="left:769px;top:241px;width:13px;color:#000"><span style="position:relative;left:-1px;letter-spacing:0.000px">3</span></span>
<span class="c" style="left:785px;top:241px;width:97px;color:#000"><span style="position:absolute;left:1px;top:0;transform:scaleX(0.9855);transform-origin:0 0">Alert Manager</span></span>
<span class="c" style="left:885px;top:241px;width:130px;color:#000"><span style="position:absolute;left:0px;top:0;transform:scaleX(1.0000);transform-origin:0 0">New</span></span>
<div style="left:0;top:255px;width:1017px;height:15px;background:#fffbd6"></div>
<span class="c" style="left:2px;top:256px;width:40px;color:#000"><span style="position:relative;left:-1px;letter-spacing:0.000px">411</span></span>
<span class="c" style="left:45px;top:256px;width:57px;color:#000"><span style="position:absolute;left:1px;top:0;transform:scaleX(0.8526);transform-origin:0 0">VTS</span></span>
<span class="c" style="left:106px;top:256px;width:418px;color:#000"><span style="position:relative;left:-1px;letter-spacing:-0.083px">Failure: Citrix1 - CPU0 Usage (Alert)</span></span>
<span class="c" style="left:595px;top:256px;width:83px;color:#000"><span style="position:relative;left:-1px;letter-spacing:0.000px">7/20/06 12:28 pm</span></span>
<span class="c" style="left:769px;top:256px;width:13px;color:#000"><span style="position:relative;left:-1px;letter-spacing:0.000px">3</span></span>
<span class="c" style="left:785px;top:256px;width:97px;color:#000"><span style="position:absolute;left:1px;top:0;transform:scaleX(0.9855);transform-origin:0 0">Alert Manager</span></span>
<span class="c" style="left:885px;top:256px;width:130px;color:#000"><span style="position:absolute;left:0px;top:0;transform:scaleX(1.0000);transform-origin:0 0">New</span></span>
<div style="left:0;top:270px;width:1017px;height:15px;background:#fff"></div>
<span class="c" style="left:2px;top:271px;width:40px;color:#000"><span style="position:relative;left:-1px;letter-spacing:0.000px">350</span></span>
<span class="c" style="left:45px;top:271px;width:57px;color:#000"><span style="position:absolute;left:1px;top:0;transform:scaleX(0.8526);transform-origin:0 0">VTS</span></span>
<span class="c" style="left:106px;top:271px;width:418px;color:#000"><span style="position:relative;left:-1px;letter-spacing:0.111px">Failure: Internet - Surgifund (Alert)</span></span>
<span class="c" style="left:595px;top:271px;width:83px;color:#000"><span style="position:relative;left:-1px;letter-spacing:0.000px">7/19/06 6:10 pm</span></span>
<span class="c" style="left:769px;top:271px;width:13px;color:#000"><span style="position:relative;left:-1px;letter-spacing:0.000px">3</span></span>
<span class="c" style="left:785px;top:271px;width:97px;color:#000"><span style="position:absolute;left:1px;top:0;transform:scaleX(0.9855);transform-origin:0 0">Alert Manager</span></span>
<span class="c" style="left:885px;top:271px;width:130px;color:#000"><span style="position:absolute;left:0px;top:0;transform:scaleX(1.0000);transform-origin:0 0">New</span></span>
<div style="left:0;top:285px;width:1017px;height:15px;background:#fffbd6"></div>
<span class="c" style="left:2px;top:286px;width:40px;color:#000"><span style="position:relative;left:-1px;letter-spacing:0.000px">348</span></span>
<span class="c" style="left:45px;top:286px;width:57px;color:#000"><span style="position:absolute;left:0px;top:0;transform:scaleX(0.8919);transform-origin:0 0">NEXXO</span></span>
<span class="c" style="left:106px;top:286px;width:418px;color:#000"><span style="position:relative;left:0px;letter-spacing:-0.115px">wireless / evdo for kiosks?</span></span>
<span class="c" style="left:595px;top:286px;width:83px;color:#000"><span style="position:relative;left:-1px;letter-spacing:0.000px">7/19/06 5:41 pm</span></span>
<span class="c" style="left:682px;top:286px;width:83px;color:#000"><span style="position:relative;left:-1px;letter-spacing:0.000px">7/20/06 12:20 pm</span></span>
<span class="c" style="left:769px;top:286px;width:13px;color:#000"><span style="position:relative;left:-1px;letter-spacing:0.000px">3</span></span>
<span class="c" style="left:785px;top:286px;width:97px;color:#000"><span style="position:absolute;left:0px;top:0;transform:scaleX(0.9780);transform-origin:0 0">Mitchell A. Shapiro</span></span>
<span class="c" style="left:885px;top:286px;width:130px;color:#000"><span style="position:absolute;left:0px;top:0;transform:scaleX(0.9787);transform-origin:0 0">Escalated</span></span>
<div style="left:0;top:300px;width:1017px;height:15px;background:#fff"></div>
<span class="c" style="left:2px;top:301px;width:40px;color:#000"><span style="position:relative;left:-1px;letter-spacing:0.000px">338</span></span>
<span class="c" style="left:45px;top:301px;width:57px;color:#000"><span style="position:absolute;left:1px;top:0;transform:scaleX(0.9116);transform-origin:0 0">WALDEN</span></span>
<span class="c" style="left:106px;top:301px;width:418px;color:#000"><span style="position:relative;left:-1px;letter-spacing:-0.068px">Retrospect notification from WVC-BACKUP1 (7/19/2006) (Alert)</span></span>
<span class="c" style="left:595px;top:301px;width:83px;color:#000"><span style="position:relative;left:-1px;letter-spacing:0.000px">7/19/06 3:12 pm</span></span>
<span class="c" style="left:769px;top:301px;width:13px;color:#000"><span style="position:relative;left:-1px;letter-spacing:0.000px">3</span></span>
<span class="c" style="left:785px;top:301px;width:97px;color:#000"><span style="position:absolute;left:1px;top:0;transform:scaleX(0.9855);transform-origin:0 0">Alert Manager</span></span>
<span class="c" style="left:885px;top:301px;width:130px;color:#000"><span style="position:absolute;left:0px;top:0;transform:scaleX(1.0000);transform-origin:0 0">New</span></span>
<div style="left:0;top:315px;width:1017px;height:15px;background:#fffbd6"></div>
<span class="c" style="left:2px;top:316px;width:40px;color:#000"><span style="position:relative;left:-1px;letter-spacing:0.000px">336</span></span>
<span class="c" style="left:45px;top:316px;width:57px;color:#000"><span style="position:absolute;left:1px;top:0;transform:scaleX(0.9116);transform-origin:0 0">WALDEN</span></span>
<span class="c" style="left:106px;top:316px;width:418px;color:#000"><span style="position:relative;left:-1px;letter-spacing:-0.068px">Retrospect notification from WVC-BACKUP1 (7/19/2006) (Alert)</span></span>
<span class="c" style="left:595px;top:316px;width:83px;color:#000"><span style="position:relative;left:-1px;letter-spacing:0.000px">7/19/06 2:02 pm</span></span>
<span class="c" style="left:769px;top:316px;width:13px;color:#000"><span style="position:relative;left:-1px;letter-spacing:0.000px">3</span></span>
<span class="c" style="left:785px;top:316px;width:97px;color:#000"><span style="position:absolute;left:1px;top:0;transform:scaleX(0.9855);transform-origin:0 0">Alert Manager</span></span>
<span class="c" style="left:885px;top:316px;width:130px;color:#000"><span style="position:absolute;left:0px;top:0;transform:scaleX(1.0000);transform-origin:0 0">New</span></span>
<div style="left:0;top:330px;width:1017px;height:15px;background:#fff"></div>
<span class="c" style="left:2px;top:331px;width:40px;color:#000"><span style="position:relative;left:-1px;letter-spacing:0.000px">324</span></span>
<span class="c" style="left:45px;top:331px;width:57px;color:#000"><span style="position:absolute;left:1px;top:0;transform:scaleX(0.9116);transform-origin:0 0">WALDEN</span></span>
<span class="c" style="left:106px;top:331px;width:418px;color:#000"><span style="position:relative;left:-1px;letter-spacing:-0.068px">(Alert) Retrospect notification from WVC-BACKUP1 (7/19/2006)</span></span>
<span class="c" style="left:595px;top:331px;width:83px;color:#000"><span style="position:relative;left:-1px;letter-spacing:0.000px">7/19/06 11:35 am</span></span>
<span class="c" style="left:769px;top:331px;width:13px;color:#000"><span style="position:relative;left:-1px;letter-spacing:0.000px">3</span></span>
<span class="c" style="left:785px;top:331px;width:97px;color:#000"><span style="position:absolute;left:1px;top:0;transform:scaleX(0.9855);transform-origin:0 0">Alert Manager</span></span>
<span class="c" style="left:885px;top:331px;width:130px;color:#000"><span style="position:absolute;left:0px;top:0;transform:scaleX(1.0000);transform-origin:0 0">New</span></span>
<div style="left:0;top:345px;width:1017px;height:15px;background:#fffbd6"></div>
<span class="c" style="left:2px;top:346px;width:40px;color:#000"><span style="position:relative;left:-1px;letter-spacing:0.000px">384</span></span>
<span class="c" style="left:45px;top:346px;width:57px;color:#000"><span style="position:absolute;left:1px;top:0;transform:scaleX(0.9184);transform-origin:0 0">WVC</span></span>
<span class="c" style="left:106px;top:346px;width:418px;color:#000"><span style="position:relative;left:-1px;letter-spacing:-0.100px">systems replaced single caption</span></span>
<span class="c" style="left:595px;top:346px;width:83px;color:#000"><span style="position:relative;left:-1px;letter-spacing:0.000px">7/20/06 11:26 am</span></span>
<span class="c" style="left:769px;top:346px;width:13px;color:#000"><span style="position:relative;left:-1px;letter-spacing:0.000px">3</span></span>
<span class="c" style="left:785px;top:346px;width:97px;color:#000"><span style="position:absolute;left:0px;top:0;transform:scaleX(1.0323);transform-origin:0 0">overall</span></span>
<span class="c" style="left:885px;top:346px;width:130px;color:#000"><span style="position:absolute;left:0px;top:0;transform:scaleX(1.0000);transform-origin:0 0">New</span></span>
<div style="left:0;top:360px;width:1017px;height:15px;background:#fff"></div>
<span class="c" style="left:2px;top:361px;width:40px;color:#000"><span style="position:relative;left:-1px;letter-spacing:0.000px">414</span></span>
<span class="c" style="left:45px;top:361px;width:57px;color:#000"><span style="position:absolute;left:0px;top:0;transform:scaleX(0.9000);transform-origin:0 0">LCP</span></span>
<span class="c" style="left:106px;top:361px;width:418px;color:#000"><span style="position:relative;left:-1px;letter-spacing:-0.063px">Failure: CITRIX4 - Printer Availability: Cambridge Color (Alert)</span></span>
<span class="c" style="left:595px;top:361px;width:83px;color:#000"><span style="position:relative;left:-1px;letter-spacing:0.000px">7/20/06 1:16 pm</span></span>
<span class="c" style="left:769px;top:361px;width:13px;color:#000"><span style="position:relative;left:-1px;letter-spacing:0.000px">3</span></span>
<span class="c" style="left:785px;top:361px;width:97px;color:#000"><span style="position:absolute;left:1px;top:0;transform:scaleX(0.9855);transform-origin:0 0">Alert Manager</span></span>
<span class="c" style="left:885px;top:361px;width:130px;color:#000"><span style="position:absolute;left:0px;top:0;transform:scaleX(1.0000);transform-origin:0 0">New</span></span>
<div style="left:0;top:375px;width:1017px;height:15px;background:#fffbd6"></div>
<span class="c" style="left:2px;top:376px;width:40px;color:#000"><span style="position:relative;left:-1px;letter-spacing:0.000px">363</span></span>
<span class="c" style="left:45px;top:376px;width:57px;color:#000"><span style="position:absolute;left:1px;top:0;transform:scaleX(0.9201);transform-origin:0 0">AXIS</span></span>
<span class="c" style="left:106px;top:376px;width:418px;color:#000"><span style="position:relative;left:-1px;letter-spacing:0.000px">Re: on newas</span></span>
<span class="c" style="left:595px;top:376px;width:83px;color:#000"><span style="position:relative;left:-1px;letter-spacing:0.000px">7/19/06 11:16 pm</span></span>
<span class="c" style="left:769px;top:376px;width:13px;color:#000"><span style="position:relative;left:-1px;letter-spacing:0.000px">3</span></span>
<span class="c" style="left:785px;top:376px;width:97px;color:#000"><span style="position:absolute;left:0px;top:0;transform:scaleX(0.9872);transform-origin:0 0">Polyxena Burley</span></span>
<span class="c" style="left:885px;top:376px;width:130px;color:#000"><span style="position:absolute;left:0px;top:0;transform:scaleX(1.0000);transform-origin:0 0">New</span></span>
<div style="left:0;top:390px;width:1017px;height:15px;background:#fff"></div>
<span class="c" style="left:2px;top:391px;width:40px;color:#000"><span style="position:relative;left:-1px;letter-spacing:0.000px">410</span></span>
<span class="c" style="left:45px;top:391px;width:57px;color:#000"><span style="position:absolute;left:1px;top:0;transform:scaleX(0.8526);transform-origin:0 0">VTS</span></span>
<span class="c" style="left:106px;top:391px;width:418px;color:#000"><span style="position:relative;left:-1px;letter-spacing:0.081px">Failure: Internet - Bay Equity (Alert)</span></span>
<span class="c" style="left:595px;top:391px;width:83px;color:#000"><span style="position:relative;left:-1px;letter-spacing:0.000px">7/20/06 12:26 pm</span></span>
<span class="c" style="left:769px;top:391px;width:13px;color:#000"><span style="position:relative;left:-1px;letter-spacing:0.000px">3</span></span>
<span class="c" style="left:785px;top:391px;width:97px;color:#000"><span style="position:absolute;left:1px;top:0;transform:scaleX(0.9855);transform-origin:0 0">Alert Manager</span></span>
<span class="c" style="left:885px;top:391px;width:130px;color:#000"><span style="position:absolute;left:0px;top:0;transform:scaleX(1.0000);transform-origin:0 0">New</span></span>
<div style="left:0;top:405px;width:1017px;height:15px;background:#fffbd6"></div>
<span class="c" style="left:2px;top:406px;width:40px;color:#000"><span style="position:relative;left:-1px;letter-spacing:0.000px">408</span></span>
<span class="c" style="left:45px;top:406px;width:57px;color:#000"><span style="position:absolute;left:1px;top:0;transform:scaleX(0.8526);transform-origin:0 0">VTS</span></span>
<span class="c" style="left:106px;top:406px;width:418px;color:#000"><span style="position:relative;left:-1px;letter-spacing:-0.172px">Failure: LCP AD2 - RDP (Alert)</span></span>
<span class="c" style="left:595px;top:406px;width:83px;color:#000"><span style="position:relative;left:-1px;letter-spacing:0.000px">7/20/06 12:14 pm</span></span>
<span class="c" style="left:769px;top:406px;width:13px;color:#000"><span style="position:relative;left:-1px;letter-spacing:0.000px">3</span></span>
<span class="c" style="left:785px;top:406px;width:97px;color:#000"><span style="position:absolute;left:1px;top:0;transform:scaleX(0.9855);transform-origin:0 0">Alert Manager</span></span>
<span class="c" style="left:885px;top:406px;width:130px;color:#000"><span style="position:absolute;left:0px;top:0;transform:scaleX(1.0000);transform-origin:0 0">New</span></span>
<div style="left:0;top:420px;width:1017px;height:15px;background:#fff"></div>
<span class="c" style="left:2px;top:421px;width:40px;color:#000"><span style="position:relative;left:-1px;letter-spacing:0.000px">406</span></span>
<span class="c" style="left:45px;top:421px;width:57px;color:#000"><span style="position:absolute;left:1px;top:0;transform:scaleX(0.8526);transform-origin:0 0">VTS</span></span>
<span class="c" style="left:106px;top:421px;width:418px;color:#000"><span style="position:relative;left:-1px;letter-spacing:-0.121px">Failure: Expert Comm - FTP (Alert)</span></span>
<span class="c" style="left:595px;top:421px;width:83px;color:#000"><span style="position:relative;left:-1px;letter-spacing:0.000px">7/20/06 11:30 am</span></span>
<span class="c" style="left:769px;top:421px;width:13px;color:#000"><span style="position:relative;left:-1px;letter-spacing:0.000px">3</span></span>
<span class="c" style="left:785px;top:421px;width:97px;color:#000"><span style="position:absolute;left:1px;top:0;transform:scaleX(0.9855);transform-origin:0 0">Alert Manager</span></span>
<span class="c" style="left:885px;top:421px;width:130px;color:#000"><span style="position:absolute;left:0px;top:0;transform:scaleX(1.0000);transform-origin:0 0">New</span></span>
<div style="left:0;top:435px;width:1017px;height:15px;background:#fffbd6"></div>
<span class="c" style="left:2px;top:436px;width:40px;color:#000"><span style="position:relative;left:-1px;letter-spacing:0.000px">405</span></span>
<span class="c" style="left:45px;top:436px;width:57px;color:#000"><span style="position:absolute;left:1px;top:0;transform:scaleX(0.8526);transform-origin:0 0">VTS</span></span>
<span class="c" style="left:106px;top:436px;width:418px;color:#000"><span style="position:relative;left:-1px;letter-spacing:0.081px">Failure: Internet - Bay Equity (Alert)</span></span>
<span class="c" style="left:595px;top:436px;width:83px;color:#000"><span style="position:relative;left:-1px;letter-spacing:0.000px">7/20/06 11:30 am</span></span>
<span class="c" style="left:769px;top:436px;width:13px;color:#000"><span style="position:relative;left:-1px;letter-spacing:0.000px">3</span></span>
<span class="c" style="left:785px;top:436px;width:97px;color:#000"><span style="position:absolute;left:1px;top:0;transform:scaleX(0.9855);transform-origin:0 0">Alert Manager</span></span>
<span class="c" style="left:885px;top:436px;width:130px;color:#000"><span style="position:absolute;left:0px;top:0;transform:scaleX(1.0000);transform-origin:0 0">New</span></span>
<div style="left:0;top:450px;width:1017px;height:15px;background:#fff"></div>
<span class="c" style="left:2px;top:451px;width:40px;color:#000"><span style="position:relative;left:-1px;letter-spacing:0.000px">354</span></span>
<span class="c" style="left:45px;top:451px;width:57px;color:#000"><span style="position:absolute;left:1px;top:0;transform:scaleX(0.9201);transform-origin:0 0">AXIS</span></span>
<span class="c" style="left:106px;top:451px;width:418px;color:#000"><span style="position:relative;left:-1px;letter-spacing:0.000px">Re: VnIAGRnA pywup</span></span>
<span class="c" style="left:595px;top:451px;width:83px;color:#000"><span style="position:relative;left:-1px;letter-spacing:0.000px">7/19/06 6:22 pm</span></span>
<span class="c" style="left:769px;top:451px;width:13px;color:#000"><span style="position:relative;left:-1px;letter-spacing:0.000px">3</span></span>
<span class="c" style="left:785px;top:451px;width:97px;color:#000"><span style="position:absolute;left:0px;top:0;transform:scaleX(1.0000);transform-origin:0 0">Shanelle Hiott</span></span>
<span class="c" style="left:885px;top:451px;width:130px;color:#000"><span style="position:absolute;left:0px;top:0;transform:scaleX(1.0000);transform-origin:0 0">New</span></span>
<div style="left:0;top:15px;width:1017px;height:1px;background:#808080"></div>
<div style="left:0;top:30px;width:1017px;height:1px;background:#808080"></div>
<div style="left:0;top:45px;width:1017px;height:1px;background:#808080"></div>
<div style="left:0;top:60px;width:1017px;height:1px;background:#808080"></div>
<div style="left:0;top:75px;width:1017px;height:1px;background:#808080"></div>
<div style="left:0;top:90px;width:1017px;height:1px;background:#808080"></div>
<div style="left:0;top:105px;width:1017px;height:1px;background:#808080"></div>
<div style="left:0;top:120px;width:1017px;height:1px;background:#808080"></div>
<div style="left:0;top:135px;width:1017px;height:1px;background:#808080"></div>
<div style="left:0;top:150px;width:1017px;height:1px;background:#808080"></div>
<div style="left:0;top:165px;width:1017px;height:1px;background:#808080"></div>
<div style="left:0;top:180px;width:1017px;height:1px;background:#808080"></div>
<div style="left:0;top:195px;width:1017px;height:1px;background:#808080"></div>
<div style="left:0;top:210px;width:1017px;height:1px;background:#808080"></div>
<div style="left:0;top:225px;width:1017px;height:1px;background:#808080"></div>
<div style="left:0;top:240px;width:1017px;height:1px;background:#808080"></div>
<div style="left:0;top:255px;width:1017px;height:1px;background:#808080"></div>
<div style="left:0;top:270px;width:1017px;height:1px;background:#808080"></div>
<div style="left:0;top:285px;width:1017px;height:1px;background:#808080"></div>
<div style="left:0;top:300px;width:1017px;height:1px;background:#808080"></div>
<div style="left:0;top:315px;width:1017px;height:1px;background:#808080"></div>
<div style="left:0;top:330px;width:1017px;height:1px;background:#808080"></div>
<div style="left:0;top:345px;width:1017px;height:1px;background:#808080"></div>
<div style="left:0;top:360px;width:1017px;height:1px;background:#808080"></div>
<div style="left:0;top:375px;width:1017px;height:1px;background:#808080"></div>
<div style="left:0;top:390px;width:1017px;height:1px;background:#808080"></div>
<div style="left:0;top:405px;width:1017px;height:1px;background:#808080"></div>
<div style="left:0;top:420px;width:1017px;height:1px;background:#808080"></div>
<div style="left:0;top:435px;width:1017px;height:1px;background:#808080"></div>
<div style="left:0;top:450px;width:1017px;height:1px;background:#808080"></div>
<div style="left:0;top:465px;width:1017px;height:1px;background:#808080"></div>
<div style="left:43px;top:1px;width:1px;height:459px;background:#808080"></div>
<div style="left:103px;top:1px;width:1px;height:459px;background:#808080"></div>
<div style="left:525px;top:1px;width:1px;height:459px;background:#808080"></div>
<div style="left:592px;top:1px;width:1px;height:459px;background:#808080"></div>
<div style="left:679px;top:1px;width:1px;height:459px;background:#808080"></div>
<div style="left:766px;top:1px;width:1px;height:459px;background:#808080"></div>
<div style="left:783px;top:1px;width:1px;height:459px;background:#808080"></div>
<div style="left:883px;top:1px;width:1px;height:459px;background:#808080"></div>
<div style="left:1016px;top:1px;width:1px;height:459px;background:#808080"></div>
</div>
<div style="left:1027px;top:78px;width:16px;height:16px;background:#404040"></div>
<div style="left:1027px;top:78px;width:15px;height:15px;background:#ffffff"></div>
<div style="left:1028px;top:79px;width:14px;height:14px;background:#808080"></div>
<div style="left:1028px;top:79px;width:13px;height:13px;background:#d4d0c8"></div>
<svg style="position:absolute;left:1027px;top:78px" width="16" height="16"><path d="M4 10h7l-3.5-4z" fill="#000"/></svg>
<div style="left:1027px;top:94px;width:16px;height:402px;background:#404040"></div>
<div style="left:1027px;top:94px;width:15px;height:401px;background:#ffffff"></div>
<div style="left:1028px;top:95px;width:14px;height:400px;background:#808080"></div>
<div style="left:1028px;top:95px;width:13px;height:399px;background:#d4d0c8"></div>
<div style="left:1027px;top:496px;width:16px;height:41px;background:repeating-conic-gradient(#fff 0 25%,#d4d0c8 0 50%) 0 0/2px 2px"></div>
<div style="left:1027px;top:537px;width:16px;height:16px;background:#404040"></div>
<div style="left:1027px;top:537px;width:15px;height:15px;background:#ffffff"></div>
<div style="left:1028px;top:538px;width:14px;height:14px;background:#808080"></div>
<div style="left:1028px;top:538px;width:13px;height:13px;background:#d4d0c8"></div>
<svg style="position:absolute;left:1027px;top:537px" width="16" height="16"><path d="M4 6h7l-3.5 4z" fill="#000"/></svg>
<div style="left:4px;top:559px;width:1045px;height:27px;background:#b2b2b2"></div>
<div style="left:57px;top:562px;width:1px;height:21px;background:#808080"></div>
<div style="left:58px;top:562px;width:1px;height:21px;background:#fff"></div>
<div style="left:175px;top:562px;width:1px;height:21px;background:#808080"></div>
<div style="left:176px;top:562px;width:1px;height:21px;background:#fff"></div>
<svg style="position:absolute;left:12px;top:565px" width="17" height="14" shape-rendering="crispEdges"><rect x="0" y="0" width="1" height="1" fill="#000000"/><rect x="1" y="0" width="1" height="1" fill="#000000"/><rect x="2" y="0" width="1" height="1" fill="#000000"/><rect x="3" y="0" width="1" height="1" fill="#000000"/><rect x="4" y="0" width="1" height="1" fill="#000000"/><rect x="5" y="0" width="1" height="1" fill="#000000"/><rect x="6" y="0" width="1" height="1" fill="#000000"/><rect x="7" y="0" width="1" height="1" fill="#000000"/><rect x="8" y="0" width="1" height="1" fill="#000000"/><rect x="0" y="1" width="1" height="1" fill="#000000"/><rect x="1" y="1" width="1" height="1" fill="#d8f0d8"/><rect x="2" y="1" width="1" height="1" fill="#f8c0b0"/><rect x="3" y="1" width="1" height="1" fill="#fffbe8"/><rect x="4" y="1" width="1" height="1" fill="#f0f080"/><rect x="5" y="1" width="1" height="1" fill="#f0f080"/><rect x="6" y="1" width="1" height="1" fill="#f0f080"/><rect x="7" y="1" width="1" height="1" fill="#fffbe8"/><rect x="8" y="1" width="1" height="1" fill="#d8d8d8"/><rect x="9" y="1" width="1" height="1" fill="#000000"/><rect x="0" y="2" width="1" height="1" fill="#000000"/><rect x="1" y="2" width="1" height="1" fill="#d8f0d8"/><rect x="2" y="2" width="1" height="1" fill="#f8c0b0"/><rect x="3" y="2" width="1" height="1" fill="#fffbe8"/><rect x="4" y="2" width="1" height="1" fill="#fffbe8"/><rect x="5" y="2" width="1" height="1" fill="#fffbe8"/><rect x="6" y="2" width="1" height="1" fill="#fffbe8"/><rect x="7" y="2" width="1" height="1" fill="#fffbe8"/><rect x="8" y="2" width="1" height="1" fill="#d8d8d8"/><rect x="10" y="2" width="1" height="1" fill="#000000"/><rect x="0" y="3" width="1" height="1" fill="#000000"/><rect x="1" y="3" width="1" height="1" fill="#d8f0d8"/><rect x="2" y="3" width="1" height="1" fill="#f8c0b0"/><rect x="3" y="3" width="1" height="1" fill="#fffbe8"/><rect x="4" y="3" width="1" height="1" fill="#f0f080"/><rect x="5" y="3" width="1" height="1" fill="#f0f080"/><rect x="6" y="3" width="1" height="1" fill="#f0f080"/><rect x="7" y="3" width="1" height="1" fill="#fffbe8"/><rect x="8" y="3" width="1" height="1" fill="#d8d8d8"/><rect x="9" y="3" width="1" height="1" fill="#d8d8d8"/><rect x="10" y="3" width="1" height="1" fill="#000000"/><rect x="0" y="4" width="1" height="1" fill="#000000"/><rect x="1" y="4" width="1" height="1" fill="#d8f0d8"/><rect x="2" y="4" width="1" height="1" fill="#f8c0b0"/><rect x="3" y="4" width="1" height="1" fill="#fffbe8"/><rect x="4" y="4" width="1" height="1" fill="#fffbe8"/><rect x="5" y="4" width="1" height="1" fill="#fffbe8"/><rect x="6" y="4" width="1" height="1" fill="#fffbe8"/><rect x="7" y="4" width="1" height="1" fill="#000000"/><rect x="8" y="4" width="1" height="1" fill="#000000"/><rect x="9" y="4" width="1" height="1" fill="#000000"/><rect x="10" y="4" width="1" height="1" fill="#000000"/><rect x="11" y="4" width="1" height="1" fill="#000000"/><rect x="0" y="5" width="1" height="1" fill="#000000"/><rect x="1" y="5" width="1" height="1" fill="#d8f0d8"/><rect x="2" y="5" width="1" height="1" fill="#f8c0b0"/><rect x="3" y="5" width="1" height="1" fill="#fffbe8"/><rect x="4" y="5" width="1" height="1" fill="#f0f080"/><rect x="5" y="5" width="1" height="1" fill="#f0f080"/><rect x="6" y="5" width="1" height="1" fill="#000000"/><rect x="7" y="5" width="1" height="1" fill="#f8e8b0"/><rect x="8" y="5" width="1" height="1" fill="#f8e8b0"/><rect x="9" y="5" width="1" height="1" fill="#fffbe8"/><rect x="10" y="5" width="1" height="1" fill="#fffbe8"/><rect x="11" y="5" width="1" height="1" fill="#000000"/><rect x="0" y="6" width="1" height="1" fill="#000000"/><rect x="1" y="6" width="1" height="1" fill="#d8f0d8"/><rect x="2" y="6" width="1" height="1" fill="#f8c0b0"/><rect x="3" y="6" width="1" height="1" fill="#fffbe8"/><rect x="4" y="6" width="1" height="1" fill="#f0f080"/><rect x="5" y="6" width="1" height="1" fill="#000000"/><rect x="6" y="6" width="1" height="1" fill="#f0a020"/><rect x="7" y="6" width="1" height="1" fill="#f8e8b0"/><rect x="8" y="6" width="1" height="1" fill="#f8e8b0"/><rect x="9" y="6" width="1" height="1" fill="#fffbe8"/><rect x="10" y="6" width="1" height="1" fill="#fffbe8"/><rect x="11" y="6" width="1" height="1" fill="#fffbe8"/><rect x="12" y="6" width="1" height="1" fill="#000000"/><rect x="0" y="7" width="1" height="1" fill="#000000"/><rect x="1" y="7" width="1" height="1" fill="#d8f0d8"/><rect x="2" y="7" width="1" height="1" fill="#f8c0b0"/><rect x="3" y="7" width="1" height="1" fill="#fffbe8"/><rect x="4" y="7" width="1" height="1" fill="#000000"/><rect x="5" y="7" width="1" height="1" fill="#f8e8b0"/><rect x="6" y="7" width="1" height="1" fill="#404040"/><rect x="7" y="7" width="1" height="1" fill="#404040"/><rect x="8" y="7" width="1" height="1" fill="#f8e8b0"/><rect x="9" y="7" width="1" height="1" fill="#fffbe8"/><rect x="10" y="7" width="1" height="1" fill="#fffbe8"/><rect x="11" y="7" width="1" height="1" fill="#fffbe8"/><rect x="12" y="7" width="1" height="1" fill="#fffbe8"/><rect x="13" y="7" width="1" height="1" fill="#000000"/><rect x="0" y="8" width="1" height="1" fill="#000000"/><rect x="1" y="8" width="1" height="1" fill="#d8f0d8"/><rect x="2" y="8" width="1" height="1" fill="#f8c0b0"/><rect x="3" y="8" width="1" height="1" fill="#000000"/><rect x="4" y="8" width="1" height="1" fill="#f8e8b0"/><rect x="5" y="8" width="1" height="1" fill="#fffbe8"/><rect x="6" y="8" width="1" height="1" fill="#fffbe8"/><rect x="7" y="8" width="1" height="1" fill="#404040"/><rect x="8" y="8" width="1" height="1" fill="#404040"/><rect x="9" y="8" width="1" height="1" fill="#404040"/><rect x="10" y="8" width="1" height="1" fill="#f8e8b0"/><rect x="11" y="8" width="1" height="1" fill="#fffbe8"/><rect x="12" y="8" width="1" height="1" fill="#fffbe8"/><rect x="13" y="8" width="1" height="1" fill="#fffbe8"/><rect x="14" y="8" width="1" height="1" fill="#000000"/><rect x="15" y="8" width="1" height="1" fill="#900060"/><rect x="0" y="9" width="1" height="1" fill="#000000"/><rect x="1" y="9" width="1" height="1" fill="#d8f0d8"/><rect x="2" y="9" width="1" height="1" fill="#f8c0b0"/><rect x="3" y="9" width="1" height="1" fill="#fffbe8"/><rect x="4" y="9" width="1" height="1" fill="#000000"/><rect x="5" y="9" width="1" height="1" fill="#fffbe8"/><rect x="6" y="9" width="1" height="1" fill="#fffbe8"/><rect x="7" y="9" width="1" height="1" fill="#fffbe8"/><rect x="8" y="9" width="1" height="1" fill="#fffbe8"/><rect x="9" y="9" width="1" height="1" fill="#404040"/><rect x="10" y="9" width="1" height="1" fill="#404040"/><rect x="11" y="9" width="1" height="1" fill="#404040"/><rect x="12" y="9" width="1" height="1" fill="#f0b040"/><rect x="13" y="9" width="1" height="1" fill="#f0b040"/><rect x="14" y="9" width="1" height="1" fill="#e01050"/><rect x="15" y="9" width="1" height="1" fill="#e01050"/><rect x="0" y="10" width="1" height="1" fill="#000000"/><rect x="1" y="10" width="1" height="1" fill="#d8f0d8"/><rect x="2" y="10" width="1" height="1" fill="#f8c0b0"/><rect x="3" y="10" width="1" height="1" fill="#fffbe8"/><rect x="4" y="10" width="1" height="1" fill="#fffbe8"/><rect x="5" y="10" width="1" height="1" fill="#000000"/><rect x="6" y="10" width="1" height="1" fill="#f8e8b0"/><rect x="7" y="10" width="1" height="1" fill="#f8e8b0"/><rect x="8" y="10" width="1" height="1" fill="#f8e8b0"/><rect x="9" y="10" width="1" height="1" fill="#f8e8b0"/><rect x="10" y="10" width="1" height="1" fill="#f0b040"/><rect x="11" y="10" width="1" height="1" fill="#f0b040"/><rect x="12" y="10" width="1" height="1" fill="#f0b040"/><rect x="13" y="10" width="1" height="1" fill="#f0b040"/><rect x="14" y="10" width="1" height="1" fill="#e01050"/><rect x="15" y="10" width="1" height="1" fill="#900060"/><rect x="0" y="11" width="1" height="1" fill="#000000"/><rect x="1" y="11" width="1" height="1" fill="#d8f0d8"/><rect x="2" y="11" width="1" height="1" fill="#f8c0b0"/><rect x="3" y="11" width="1" height="1" fill="#fffbe8"/><rect x="4" y="11" width="1" height="1" fill="#fffbe8"/><rect x="5" y="11" width="1" height="1" fill="#fffbe8"/><rect x="6" y="11" width="1" height="1" fill="#000000"/><rect x="7" y="11" width="1" height="1" fill="#000000"/><rect x="8" y="11" width="1" height="1" fill="#000000"/><rect x="9" y="11" width="1" height="1" fill="#000000"/><rect x="10" y="11" width="1" height="1" fill="#000000"/><rect x="11" y="11" width="1" height="1" fill="#000000"/><rect x="12" y="11" width="1" height="1" fill="#000000"/><rect x="13" y="11" width="1" height="1" fill="#000000"/><rect x="14" y="11" width="1" height="1" fill="#900060"/><rect x="15" y="11" width="1" height="1" fill="#900060"/><rect x="0" y="12" width="1" height="1" fill="#000000"/><rect x="1" y="12" width="1" height="1" fill="#d8f0d8"/><rect x="2" y="12" width="1" height="1" fill="#f8c0b0"/><rect x="3" y="12" width="1" height="1" fill="#c8d8f0"/><rect x="4" y="12" width="1" height="1" fill="#c8d8f0"/><rect x="5" y="12" width="1" height="1" fill="#c8d8f0"/><rect x="6" y="12" width="1" height="1" fill="#fffbe8"/><rect x="7" y="12" width="1" height="1" fill="#fffbe8"/><rect x="8" y="12" width="1" height="1" fill="#fffbe8"/><rect x="9" y="12" width="1" height="1" fill="#fffbe8"/><rect x="10" y="12" width="1" height="1" fill="#fffbe8"/><rect x="11" y="12" width="1" height="1" fill="#000000"/><rect x="12" y="12" width="1" height="1" fill="#000000"/><rect x="13" y="12" width="1" height="1" fill="#000000"/><rect x="0" y="13" width="1" height="1" fill="#000000"/><rect x="1" y="13" width="1" height="1" fill="#000000"/><rect x="2" y="13" width="1" height="1" fill="#000000"/><rect x="3" y="13" width="1" height="1" fill="#000000"/><rect x="4" y="13" width="1" height="1" fill="#000000"/><rect x="5" y="13" width="1" height="1" fill="#000000"/><rect x="6" y="13" width="1" height="1" fill="#000000"/><rect x="7" y="13" width="1" height="1" fill="#000000"/><rect x="8" y="13" width="1" height="1" fill="#000000"/><rect x="9" y="13" width="1" height="1" fill="#000000"/><rect x="10" y="13" width="1" height="1" fill="#000000"/><rect x="11" y="13" width="1" height="1" fill="#000000"/></svg>
<svg style="position:absolute;left:67px;top:565px" width="15" height="14" shape-rendering="crispEdges"><rect x="4" y="0" width="1" height="1" fill="#000000"/><rect x="5" y="0" width="1" height="1" fill="#000000"/><rect x="6" y="0" width="1" height="1" fill="#000000"/><rect x="7" y="0" width="1" height="1" fill="#000000"/><rect x="8" y="0" width="1" height="1" fill="#000000"/><rect x="9" y="0" width="1" height="1" fill="#000000"/><rect x="10" y="0" width="1" height="1" fill="#000000"/><rect x="11" y="0" width="1" height="1" fill="#000000"/><rect x="4" y="1" width="1" height="1" fill="#000000"/><rect x="5" y="1" width="1" height="1" fill="#f8c8b8"/><rect x="6" y="1" width="1" height="1" fill="#f0f090"/><rect x="7" y="1" width="1" height="1" fill="#f0f090"/><rect x="8" y="1" width="1" height="1" fill="#f0f090"/><rect x="9" y="1" width="1" height="1" fill="#f0f090"/><rect x="10" y="1" width="1" height="1" fill="#a0a0a0"/><rect x="11" y="1" width="1" height="1" fill="#e8e8e8"/><rect x="12" y="1" width="1" height="1" fill="#000000"/><rect x="4" y="2" width="1" height="1" fill="#000000"/><rect x="5" y="2" width="1" height="1" fill="#f8c8b8"/><rect x="6" y="2" width="1" height="1" fill="#fffbe8"/><rect x="7" y="2" width="1" height="1" fill="#fffbe8"/><rect x="8" y="2" width="1" height="1" fill="#fffbe8"/><rect x="9" y="2" width="1" height="1" fill="#fffbe8"/><rect x="10" y="2" width="1" height="1" fill="#a0a0a0"/><rect x="11" y="2" width="1" height="1" fill="#e8e8e8"/><rect x="12" y="2" width="1" height="1" fill="#e8e8e8"/><rect x="13" y="2" width="1" height="1" fill="#000000"/><rect x="4" y="3" width="1" height="1" fill="#000000"/><rect x="5" y="3" width="1" height="1" fill="#f8c8b8"/><rect x="6" y="3" width="1" height="1" fill="#f0f090"/><rect x="7" y="3" width="1" height="1" fill="#f0f090"/><rect x="8" y="3" width="1" height="1" fill="#f0f090"/><rect x="9" y="3" width="1" height="1" fill="#f0f090"/><rect x="10" y="3" width="1" height="1" fill="#fffbe8"/><rect x="11" y="3" width="1" height="1" fill="#a0a0a0"/><rect x="12" y="3" width="1" height="1" fill="#a0a0a0"/><rect x="13" y="3" width="1" height="1" fill="#a0a0a0"/><rect x="14" y="3" width="1" height="1" fill="#000000"/><rect x="2" y="4" width="1" height="1" fill="#000000"/><rect x="3" y="4" width="1" height="1" fill="#000000"/><rect x="4" y="4" width="1" height="1" fill="#000000"/><rect x="5" y="4" width="1" height="1" fill="#000000"/><rect x="6" y="4" width="1" height="1" fill="#fffbe8"/><rect x="7" y="4" width="1" height="1" fill="#fffbe8"/><rect x="8" y="4" width="1" height="1" fill="#fffbe8"/><rect x="9" y="4" width="1" height="1" fill="#fffbe8"/><rect x="10" y="4" width="1" height="1" fill="#fffbe8"/><rect x="11" y="4" width="1" height="1" fill="#fffbe8"/><rect x="12" y="4" width="1" height="1" fill="#fffbe8"/><rect x="13" y="4" width="1" height="1" fill="#fffbe8"/><rect x="14" y="4" width="1" height="1" fill="#000000"/><rect x="2" y="5" width="1" height="1" fill="#000000"/><rect x="3" y="5" width="1" height="1" fill="#00b000"/><rect x="4" y="5" width="1" height="1" fill="#00b000"/><rect x="5" y="5" width="1" height="1" fill="#000000"/><rect x="6" y="5" width="1" height="1" fill="#f0f090"/><rect x="7" y="5" width="1" height="1" fill="#f0f090"/><rect x="8" y="5" width="1" height="1" fill="#f0f090"/><rect x="9" y="5" width="1" height="1" fill="#f0f090"/><rect x="10" y="5" width="1" height="1" fill="#f0f090"/><rect x="11" y="5" width="1" height="1" fill="#f0f090"/><rect x="12" y="5" width="1" height="1" fill="#f0f090"/><rect x="13" y="5" width="1" height="1" fill="#f0f090"/><rect x="14" y="5" width="1" height="1" fill="#000000"/><rect x="0" y="6" width="1" height="1" fill="#000000"/><rect x="1" y="6" width="1" height="1" fill="#000000"/><rect x="2" y="6" width="1" height="1" fill="#000000"/><rect x="3" y="6" width="1" height="1" fill="#00b000"/><rect x="4" y="6" width="1" height="1" fill="#00b000"/><rect x="5" y="6" width="1" height="1" fill="#000000"/><rect x="6" y="6" width="1" height="1" fill="#000000"/><rect x="7" y="6" width="1" height="1" fill="#000000"/><rect x="8" y="6" width="1" height="1" fill="#fffbe8"/><rect x="9" y="6" width="1" height="1" fill="#fffbe8"/><rect x="10" y="6" width="1" height="1" fill="#fffbe8"/><rect x="11" y="6" width="1" height="1" fill="#fffbe8"/><rect x="12" y="6" width="1" height="1" fill="#fffbe8"/><rect x="13" y="6" width="1" height="1" fill="#fffbe8"/><rect x="14" y="6" width="1" height="1" fill="#000000"/><rect x="0" y="7" width="1" height="1" fill="#000000"/><rect x="1" y="7" width="1" height="1" fill="#00b000"/><rect x="2" y="7" width="1" height="1" fill="#00b000"/><rect x="3" y="7" width="1" height="1" fill="#00b000"/><rect x="4" y="7" width="1" height="1" fill="#00b000"/><rect x="5" y="7" width="1" height="1" fill="#00b000"/><rect x="6" y="7" width="1" height="1" fill="#00b000"/><rect x="7" y="7" width="1" height="1" fill="#000000"/><rect x="8" y="7" width="1" height="1" fill="#f0f090"/><rect x="9" y="7" width="1" height="1" fill="#f0f090"/><rect x="10" y="7" width="1" height="1" fill="#f0f090"/><rect x="11" y="7" width="1" height="1" fill="#f0f090"/><rect x="12" y="7" width="1" height="1" fill="#f0f090"/><rect x="13" y="7" width="1" height="1" fill="#f0f090"/><rect x="14" y="7" width="1" height="1" fill="#000000"/><rect x="0" y="8" width="1" height="1" fill="#000000"/><rect x="1" y="8" width="1" height="1" fill="#00b000"/><rect x="2" y="8" width="1" height="1" fill="#00b000"/><rect x="3" y="8" width="1" height="1" fill="#00b000"/><rect x="4" y="8" width="1" height="1" fill="#00b000"/><rect x="5" y="8" width="1" height="1" fill="#00b000"/><rect x="6" y="8" width="1" height="1" fill="#00b000"/><rect x="7" y="8" width="1" height="1" fill="#000000"/><rect x="8" y="8" width="1" height="1" fill="#fffbe8"/><rect x="9" y="8" width="1" height="1" fill="#fffbe8"/><rect x="10" y="8" width="1" height="1" fill="#fffbe8"/><rect x="11" y="8" width="1" height="1" fill="#fffbe8"/><rect x="12" y="8" width="1" height="1" fill="#fffbe8"/><rect x="13" y="8" width="1" height="1" fill="#fffbe8"/><rect x="14" y="8" width="1" height="1" fill="#000000"/><rect x="0" y="9" width="1" height="1" fill="#000000"/><rect x="1" y="9" width="1" height="1" fill="#000000"/><rect x="2" y="9" width="1" height="1" fill="#000000"/><rect x="3" y="9" width="1" height="1" fill="#00b000"/><rect x="4" y="9" width="1" height="1" fill="#00b000"/><rect x="5" y="9" width="1" height="1" fill="#000000"/><rect x="6" y="9" width="1" height="1" fill="#000000"/><rect x="7" y="9" width="1" height="1" fill="#000000"/><rect x="8" y="9" width="1" height="1" fill="#f0f090"/><rect x="9" y="9" width="1" height="1" fill="#f0f090"/><rect x="10" y="9" width="1" height="1" fill="#f0f090"/><rect x="11" y="9" width="1" height="1" fill="#f0f090"/><rect x="12" y="9" width="1" height="1" fill="#f0f090"/><rect x="13" y="9" width="1" height="1" fill="#f0f090"/><rect x="14" y="9" width="1" height="1" fill="#000000"/><rect x="2" y="10" width="1" height="1" fill="#000000"/><rect x="3" y="10" width="1" height="1" fill="#00b000"/><rect x="4" y="10" width="1" height="1" fill="#00b000"/><rect x="5" y="10" width="1" height="1" fill="#000000"/><rect x="6" y="10" width="1" height="1" fill="#fffbe8"/><rect x="7" y="10" width="1" height="1" fill="#fffbe8"/><rect x="8" y="10" width="1" height="1" fill="#fffbe8"/><rect x="9" y="10" width="1" height="1" fill="#fffbe8"/><rect x="10" y="10" width="1" height="1" fill="#fffbe8"/><rect x="11" y="10" width="1" height="1" fill="#fffbe8"/><rect x="12" y="10" width="1" height="1" fill="#fffbe8"/><rect x="13" y="10" width="1" height="1" fill="#fffbe8"/><rect x="14" y="10" width="1" height="1" fill="#000000"/><rect x="2" y="11" width="1" height="1" fill="#000000"/><rect x="3" y="11" width="1" height="1" fill="#000000"/><rect x="4" y="11" width="1" height="1" fill="#000000"/><rect x="5" y="11" width="1" height="1" fill="#000000"/><rect x="6" y="11" width="1" height="1" fill="#f0f090"/><rect x="7" y="11" width="1" height="1" fill="#f0f090"/><rect x="8" y="11" width="1" height="1" fill="#f0f090"/><rect x="9" y="11" width="1" height="1" fill="#f0f090"/><rect x="10" y="11" width="1" height="1" fill="#f0f090"/><rect x="11" y="11" width="1" height="1" fill="#f0f090"/><rect x="12" y="11" width="1" height="1" fill="#f0f090"/><rect x="13" y="11" width="1" height="1" fill="#f0f090"/><rect x="14" y="11" width="1" height="1" fill="#000000"/><rect x="4" y="12" width="1" height="1" fill="#000000"/><rect x="5" y="12" width="1" height="1" fill="#f8c8b8"/><rect x="6" y="12" width="1" height="1" fill="#fffbe8"/><rect x="7" y="12" width="1" height="1" fill="#fffbe8"/><rect x="8" y="12" width="1" height="1" fill="#fffbe8"/><rect x="9" y="12" width="1" height="1" fill="#fffbe8"/><rect x="10" y="12" width="1" height="1" fill="#fffbe8"/><rect x="11" y="12" width="1" height="1" fill="#fffbe8"/><rect x="12" y="12" width="1" height="1" fill="#fffbe8"/><rect x="13" y="12" width="1" height="1" fill="#fffbe8"/><rect x="14" y="12" width="1" height="1" fill="#000000"/><rect x="4" y="13" width="1" height="1" fill="#000000"/><rect x="5" y="13" width="1" height="1" fill="#000000"/><rect x="6" y="13" width="1" height="1" fill="#000000"/><rect x="7" y="13" width="1" height="1" fill="#000000"/><rect x="8" y="13" width="1" height="1" fill="#000000"/><rect x="9" y="13" width="1" height="1" fill="#000000"/><rect x="10" y="13" width="1" height="1" fill="#000000"/><rect x="11" y="13" width="1" height="1" fill="#000000"/><rect x="12" y="13" width="1" height="1" fill="#000000"/><rect x="13" y="13" width="1" height="1" fill="#000000"/><rect x="14" y="13" width="1" height="1" fill="#000000"/></svg>
<svg style="position:absolute;left:116px;top:564px" width="17" height="17" viewBox="0 0 17 17" shape-rendering="crispEdges">
<path d="M4 4h13v13h-13z" fill="#fff"/>
<rect x="4" y="16" width="13" height="1" fill="#fff"/><rect x="16" y="4" width="1" height="13" fill="#fff"/>
<path d="M3 0h10v1h1v1h1v1h1v13h-13z" fill="#808080"/>
<rect x="0" y="7" width="3" height="4" fill="#808080"/><rect x="1" y="11" width="2" height="1" fill="#fff"/>
<rect x="16" y="4" width="1" height="13" fill="#fff"/><rect x="4" y="16" width="13" height="1" fill="#fff"/>
<rect x="9" y="3" width="1" height="1" fill="#fff"/><rect x="9" y="6" width="1" height="1" fill="#fff"/><rect x="9" y="9" width="1" height="1" fill="#fff"/><rect x="9" y="12" width="1" height="1" fill="#fff"/>
<rect x="13" y="7" width="1" height="1" fill="#fff"/><rect x="13" y="9" width="1" height="1" fill="#fff"/><rect x="13" y="11" width="1" height="1" fill="#fff"/><rect x="13" y="13" width="1" height="1" fill="#fff"/>
</svg>
<svg style="position:absolute;left:188px;top:568px" width="10" height="9" viewBox="0 0 10 9" shape-rendering="crispEdges"><rect x="8" y="1" width="1" height="1" fill="#8a0010"/><rect x="7" y="2" width="1" height="1" fill="#8a0010"/><rect x="6" y="3" width="1" height="1" fill="#8a0010"/><rect x="5" y="4" width="1" height="1" fill="#8a0010"/><rect x="1" y="5" width="1" height="1" fill="#8a0010"/><rect x="2" y="5" width="1" height="1" fill="#8a0010"/><rect x="4" y="5" width="1" height="1" fill="#8a0010"/><rect x="5" y="5" width="1" height="1" fill="#8a0010"/><rect x="2" y="6" width="1" height="1" fill="#8a0010"/><rect x="3" y="6" width="1" height="1" fill="#8a0010"/><rect x="4" y="6" width="1" height="1" fill="#8a0010"/><rect x="3" y="7" width="1" height="1" fill="#8a0010"/><rect x="4" y="7" width="1" height="1" fill="#8a0010"/></svg>
<svg style="position:absolute;left:247px;top:563px" width="18" height="18" shape-rendering="crispEdges"><rect x="12" y="1" width="1" height="1" fill="#3a6af0"/><rect x="13" y="1" width="1" height="1" fill="#3a6af0"/><rect x="3" y="2" width="1" height="1" fill="#ffffff"/><rect x="4" y="2" width="1" height="1" fill="#ffffff"/><rect x="5" y="2" width="1" height="1" fill="#ffffff"/><rect x="6" y="2" width="1" height="1" fill="#ffffff"/><rect x="7" y="2" width="1" height="1" fill="#ffffff"/><rect x="8" y="2" width="1" height="1" fill="#ffffff"/><rect x="9" y="2" width="1" height="1" fill="#404040"/><rect x="11" y="2" width="1" height="1" fill="#3a6af0"/><rect x="12" y="2" width="1" height="1" fill="#3a6af0"/><rect x="13" y="2" width="1" height="1" fill="#90b8ff"/><rect x="14" y="2" width="1" height="1" fill="#3a6af0"/><rect x="3" y="3" width="1" height="1" fill="#ffffff"/><rect x="4" y="3" width="1" height="1" fill="#909090"/><rect x="5" y="3" width="1" height="1" fill="#909090"/><rect x="6" y="3" width="1" height="1" fill="#909090"/><rect x="7" y="3" width="1" height="1" fill="#909090"/><rect x="8" y="3" width="1" height="1" fill="#ffffff"/><rect x="9" y="3" width="1" height="1" fill="#404040"/><rect x="10" y="3" width="1" height="1" fill="#3a6af0"/><rect x="11" y="3" width="1" height="1" fill="#3a6af0"/><rect x="12" y="3" width="1" height="1" fill="#90b8ff"/><rect x="13" y="3" width="1" height="1" fill="#3a6af0"/><rect x="14" y="3" width="1" height="1" fill="#3a6af0"/><rect x="15" y="3" width="1" height="1" fill="#3a6af0"/><rect x="3" y="4" width="1" height="1" fill="#ffffff"/><rect x="4" y="4" width="1" height="1" fill="#ffffff"/><rect x="5" y="4" width="1" height="1" fill="#ffffff"/><rect x="6" y="4" width="1" height="1" fill="#ffffff"/><rect x="7" y="4" width="1" height="1" fill="#ffffff"/><rect x="8" y="4" width="1" height="1" fill="#ffffff"/><rect x="9" y="4" width="1" height="1" fill="#404040"/><rect x="11" y="4" width="1" height="1" fill="#3a6af0"/><rect x="12" y="4" width="1" height="1" fill="#3a6af0"/><rect x="13" y="4" width="1" height="1" fill="#90b8ff"/><rect x="14" y="4" width="1" height="1" fill="#3a6af0"/><rect x="15" y="4" width="1" height="1" fill="#3a6af0"/><rect x="16" y="4" width="1" height="1" fill="#3a6af0"/><rect x="3" y="5" width="1" height="1" fill="#ffffff"/><rect x="4" y="5" width="1" height="1" fill="#909090"/><rect x="5" y="5" width="1" height="1" fill="#909090"/><rect x="6" y="5" width="1" height="1" fill="#909090"/><rect x="7" y="5" width="1" height="1" fill="#909090"/><rect x="8" y="5" width="1" height="1" fill="#ffffff"/><rect x="9" y="5" width="1" height="1" fill="#404040"/><rect x="12" y="5" width="1" height="1" fill="#3a6af0"/><rect x="13" y="5" width="1" height="1" fill="#3a6af0"/><rect x="15" y="5" width="1" height="1" fill="#3a6af0"/><rect x="16" y="5" width="1" height="1" fill="#3a6af0"/><rect x="3" y="6" width="1" height="1" fill="#ffffff"/><rect x="4" y="6" width="1" height="1" fill="#ffffff"/><rect x="5" y="6" width="1" height="1" fill="#ffffff"/><rect x="6" y="6" width="1" height="1" fill="#ffffff"/><rect x="7" y="6" width="1" height="1" fill="#ffffff"/><rect x="8" y="6" width="1" height="1" fill="#ffffff"/><rect x="9" y="6" width="1" height="1" fill="#404040"/><rect x="13" y="6" width="1" height="1" fill="#3a6af0"/><rect x="16" y="6" width="1" height="1" fill="#3a6af0"/><rect x="17" y="6" width="1" height="1" fill="#3a6af0"/><rect x="1" y="7" width="1" height="1" fill="#3a6af0"/><rect x="3" y="7" width="1" height="1" fill="#ffffff"/><rect x="4" y="7" width="1" height="1" fill="#909090"/><rect x="5" y="7" width="1" height="1" fill="#909090"/><rect x="6" y="7" width="1" height="1" fill="#909090"/><rect x="7" y="7" width="1" height="1" fill="#909090"/><rect x="8" y="7" width="1" height="1" fill="#ffffff"/><rect x="9" y="7" width="1" height="1" fill="#ffffff"/><rect x="10" y="7" width="1" height="1" fill="#ffffff"/><rect x="11" y="7" width="1" height="1" fill="#ffffff"/><rect x="12" y="7" width="1" height="1" fill="#ffffff"/><rect x="13" y="7" width="1" height="1" fill="#ffffff"/><rect x="14" y="7" width="1" height="1" fill="#ffffff"/><rect x="16" y="7" width="1" height="1" fill="#3a6af0"/><rect x="17" y="7" width="1" height="1" fill="#3a6af0"/><rect x="3" y="8" width="1" height="1" fill="#ffffff"/><rect x="4" y="8" width="1" height="1" fill="#ffffff"/><rect x="5" y="8" width="1" height="1" fill="#ffffff"/><rect x="6" y="8" width="1" height="1" fill="#ffffff"/><rect x="7" y="8" width="1" height="1" fill="#ffffff"/><rect x="8" y="8" width="1" height="1" fill="#ffffff"/><rect x="9" y="8" width="1" height="1" fill="#ffffff"/><rect x="10" y="8" width="1" height="1" fill="#909090"/><rect x="11" y="8" width="1" height="1" fill="#909090"/><rect x="12" y="8" width="1" height="1" fill="#909090"/><rect x="13" y="8" width="1" height="1" fill="#909090"/><rect x="14" y="8" width="1" height="1" fill="#ffffff"/><rect x="15" y="8" width="1" height="1" fill="#404040"/><rect x="16" y="8" width="1" height="1" fill="#3a6af0"/><rect x="17" y="8" width="1" height="1" fill="#3a6af0"/><rect x="0" y="9" width="1" height="1" fill="#3a6af0"/><rect x="1" y="9" width="1" height="1" fill="#3a6af0"/><rect x="3" y="9" width="1" height="1" fill="#ffffff"/><rect x="4" y="9" width="1" height="1" fill="#b8d0f0"/><rect x="5" y="9" width="1" height="1" fill="#b8d0f0"/><rect x="6" y="9" width="1" height="1" fill="#b8d0f0"/><rect x="7" y="9" width="1" height="1" fill="#b8d0f0"/><rect x="8" y="9" width="1" height="1" fill="#ffffff"/><rect x="9" y="9" width="1" height="1" fill="#ffffff"/><rect x="10" y="9" width="1" height="1" fill="#ffffff"/><rect x="11" y="9" width="1" height="1" fill="#ffffff"/><rect x="12" y="9" width="1" height="1" fill="#ffffff"/><rect x="13" y="9" width="1" height="1" fill="#ffffff"/><rect x="14" y="9" width="1" height="1" fill="#ffffff"/><rect x="15" y="9" width="1" height="1" fill="#404040"/><rect x="16" y="9" width="1" height="1" fill="#0020a0"/><rect x="17" y="9" width="1" height="1" fill="#0020a0"/><rect x="0" y="10" width="1" height="1" fill="#90b8ff"/><rect x="1" y="10" width="1" height="1" fill="#3a6af0"/><rect x="3" y="10" width="1" height="1" fill="#ffffff"/><rect x="4" y="10" width="1" height="1" fill="#ffffff"/><rect x="5" y="10" width="1" height="1" fill="#ffffff"/><rect x="6" y="10" width="1" height="1" fill="#ffffff"/><rect x="7" y="10" width="1" height="1" fill="#ffffff"/><rect x="8" y="10" width="1" height="1" fill="#ffffff"/><rect x="9" y="10" width="1" height="1" fill="#ffffff"/><rect x="10" y="10" width="1" height="1" fill="#909090"/><rect x="11" y="10" width="1" height="1" fill="#909090"/><rect x="12" y="10" width="1" height="1" fill="#909090"/><rect x="13" y="10" width="1" height="1" fill="#909090"/><rect x="14" y="10" width="1" height="1" fill="#ffffff"/><rect x="15" y="10" width="1" height="1" fill="#0020a0"/><rect x="1" y="11" width="1" height="1" fill="#3a6af0"/><rect x="2" y="11" width="1" height="1" fill="#3a6af0"/><rect x="9" y="11" width="1" height="1" fill="#ffffff"/><rect x="10" y="11" width="1" height="1" fill="#ffffff"/><rect x="11" y="11" width="1" height="1" fill="#ffffff"/><rect x="12" y="11" width="1" height="1" fill="#ffffff"/><rect x="13" y="11" width="1" height="1" fill="#ffffff"/><rect x="14" y="11" width="1" height="1" fill="#b8d0f0"/><rect x="15" y="11" width="1" height="1" fill="#404040"/><rect x="1" y="12" width="1" height="1" fill="#3a6af0"/><rect x="2" y="12" width="1" height="1" fill="#3a6af0"/><rect x="3" y="12" width="1" height="1" fill="#3a6af0"/><rect x="5" y="12" width="1" height="1" fill="#3a6af0"/><rect x="9" y="12" width="1" height="1" fill="#ffffff"/><rect x="10" y="12" width="1" height="1" fill="#909090"/><rect x="11" y="12" width="1" height="1" fill="#909090"/><rect x="12" y="12" width="1" height="1" fill="#909090"/><rect x="13" y="12" width="1" height="1" fill="#909090"/><rect x="14" y="12" width="1" height="1" fill="#b8d0f0"/><rect x="15" y="12" width="1" height="1" fill="#404040"/><rect x="2" y="13" width="1" height="1" fill="#3a6af0"/><rect x="3" y="13" width="1" height="1" fill="#3a6af0"/><rect x="4" y="13" width="1" height="1" fill="#3a6af0"/><rect x="5" y="13" width="1" height="1" fill="#3a6af0"/><rect x="6" y="13" width="1" height="1" fill="#3a6af0"/><rect x="9" y="13" width="1" height="1" fill="#ffffff"/><rect x="10" y="13" width="1" height="1" fill="#ffffff"/><rect x="11" y="13" width="1" height="1" fill="#ffffff"/><rect x="12" y="13" width="1" height="1" fill="#ffffff"/><rect x="13" y="13" width="1" height="1" fill="#ffffff"/><rect x="14" y="13" width="1" height="1" fill="#b8d0f0"/><rect x="15" y="13" width="1" height="1" fill="#404040"/><rect x="3" y="14" width="1" height="1" fill="#3a6af0"/><rect x="4" y="14" width="1" height="1" fill="#90b8ff"/><rect x="5" y="14" width="1" height="1" fill="#3a6af0"/><rect x="6" y="14" width="1" height="1" fill="#3a6af0"/><rect x="7" y="14" width="1" height="1" fill="#3a6af0"/><rect x="9" y="14" width="1" height="1" fill="#ffffff"/><rect x="10" y="14" width="1" height="1" fill="#909090"/><rect x="11" y="14" width="1" height="1" fill="#909090"/><rect x="12" y="14" width="1" height="1" fill="#909090"/><rect x="13" y="14" width="1" height="1" fill="#909090"/><rect x="14" y="14" width="1" height="1" fill="#b8d0f0"/><rect x="15" y="14" width="1" height="1" fill="#404040"/><rect x="4" y="15" width="1" height="1" fill="#3a6af0"/><rect x="5" y="15" width="1" height="1" fill="#3a6af0"/><rect x="6" y="15" width="1" height="1" fill="#0020a0"/><rect x="9" y="15" width="1" height="1" fill="#ffffff"/><rect x="10" y="15" width="1" height="1" fill="#ffffff"/><rect x="11" y="15" width="1" height="1" fill="#ffffff"/><rect x="12" y="15" width="1" height="1" fill="#ffffff"/><rect x="13" y="15" width="1" height="1" fill="#ffffff"/><rect x="14" y="15" width="1" height="1" fill="#b8d0f0"/><rect x="15" y="15" width="1" height="1" fill="#404040"/><rect x="4" y="16" width="1" height="1" fill="#0020a0"/><rect x="5" y="16" width="1" height="1" fill="#0020a0"/><rect x="10" y="16" width="1" height="1" fill="#404040"/><rect x="11" y="16" width="1" height="1" fill="#404040"/><rect x="12" y="16" width="1" height="1" fill="#404040"/><rect x="13" y="16" width="1" height="1" fill="#404040"/><rect x="14" y="16" width="1" height="1" fill="#404040"/><rect x="15" y="16" width="1" height="1" fill="#404040"/><rect x="4" y="17" width="1" height="1" fill="#0020a0"/></svg>
<div style="left:0px;top:0px;width:0;height:0"></div>
<span class="t" style="left:31px;top:565px;letter-spacing:0.000px;">E<u>d</u>it</span>
<span class="t" style="left:88px;top:565px;letter-spacing:0.000px;"><u>A</u>dd</span>
<span class="t" style="left:138px;top:566px;color:#fff;letter-spacing:-0.25px">De<u>l</u>ete</span>
<span class="t" style="left:137px;top:565px;color:#808080;letter-spacing:-0.25px">De<u>l</u>ete</span>
<span class="t" style="left:206px;top:565px;letter-spacing:-0.200px;">Acce<u>p</u>t</span>
<span class="t" style="left:268px;top:565px;letter-spacing:0.167px;">Refresh</span>
<span class="t" style="left:935px;top:565px;letter-spacing:0.222px;">(33 items)</span>
<svg style="position:absolute;left:999px;top:568px" width="9" height="8" shape-rendering="crispEdges"><rect x="0" y="0" width="1" height="1"/><rect x="1" y="0" width="1" height="1"/><rect x="7" y="0" width="1" height="1"/><rect x="8" y="0" width="1" height="1"/><rect x="1" y="1" width="1" height="1"/><rect x="2" y="1" width="1" height="1"/><rect x="6" y="1" width="1" height="1"/><rect x="7" y="1" width="1" height="1"/><rect x="2" y="2" width="1" height="1"/><rect x="3" y="2" width="1" height="1"/><rect x="5" y="2" width="1" height="1"/><rect x="6" y="2" width="1" height="1"/><rect x="3" y="3" width="1" height="1"/><rect x="4" y="3" width="1" height="1"/><rect x="5" y="3" width="1" height="1"/><rect x="3" y="4" width="1" height="1"/><rect x="4" y="4" width="1" height="1"/><rect x="5" y="4" width="1" height="1"/><rect x="2" y="5" width="1" height="1"/><rect x="3" y="5" width="1" height="1"/><rect x="5" y="5" width="1" height="1"/><rect x="6" y="5" width="1" height="1"/><rect x="1" y="6" width="1" height="1"/><rect x="2" y="6" width="1" height="1"/><rect x="6" y="6" width="1" height="1"/><rect x="7" y="6" width="1" height="1"/><rect x="0" y="7" width="1" height="1"/><rect x="1" y="7" width="1" height="1"/><rect x="7" y="7" width="1" height="1"/><rect x="8" y="7" width="1" height="1"/></svg>
<span class="t" style="left:1016px;top:565px;letter-spacing:-0.500px;"><u>C</u>lose</span>
</body></html>
